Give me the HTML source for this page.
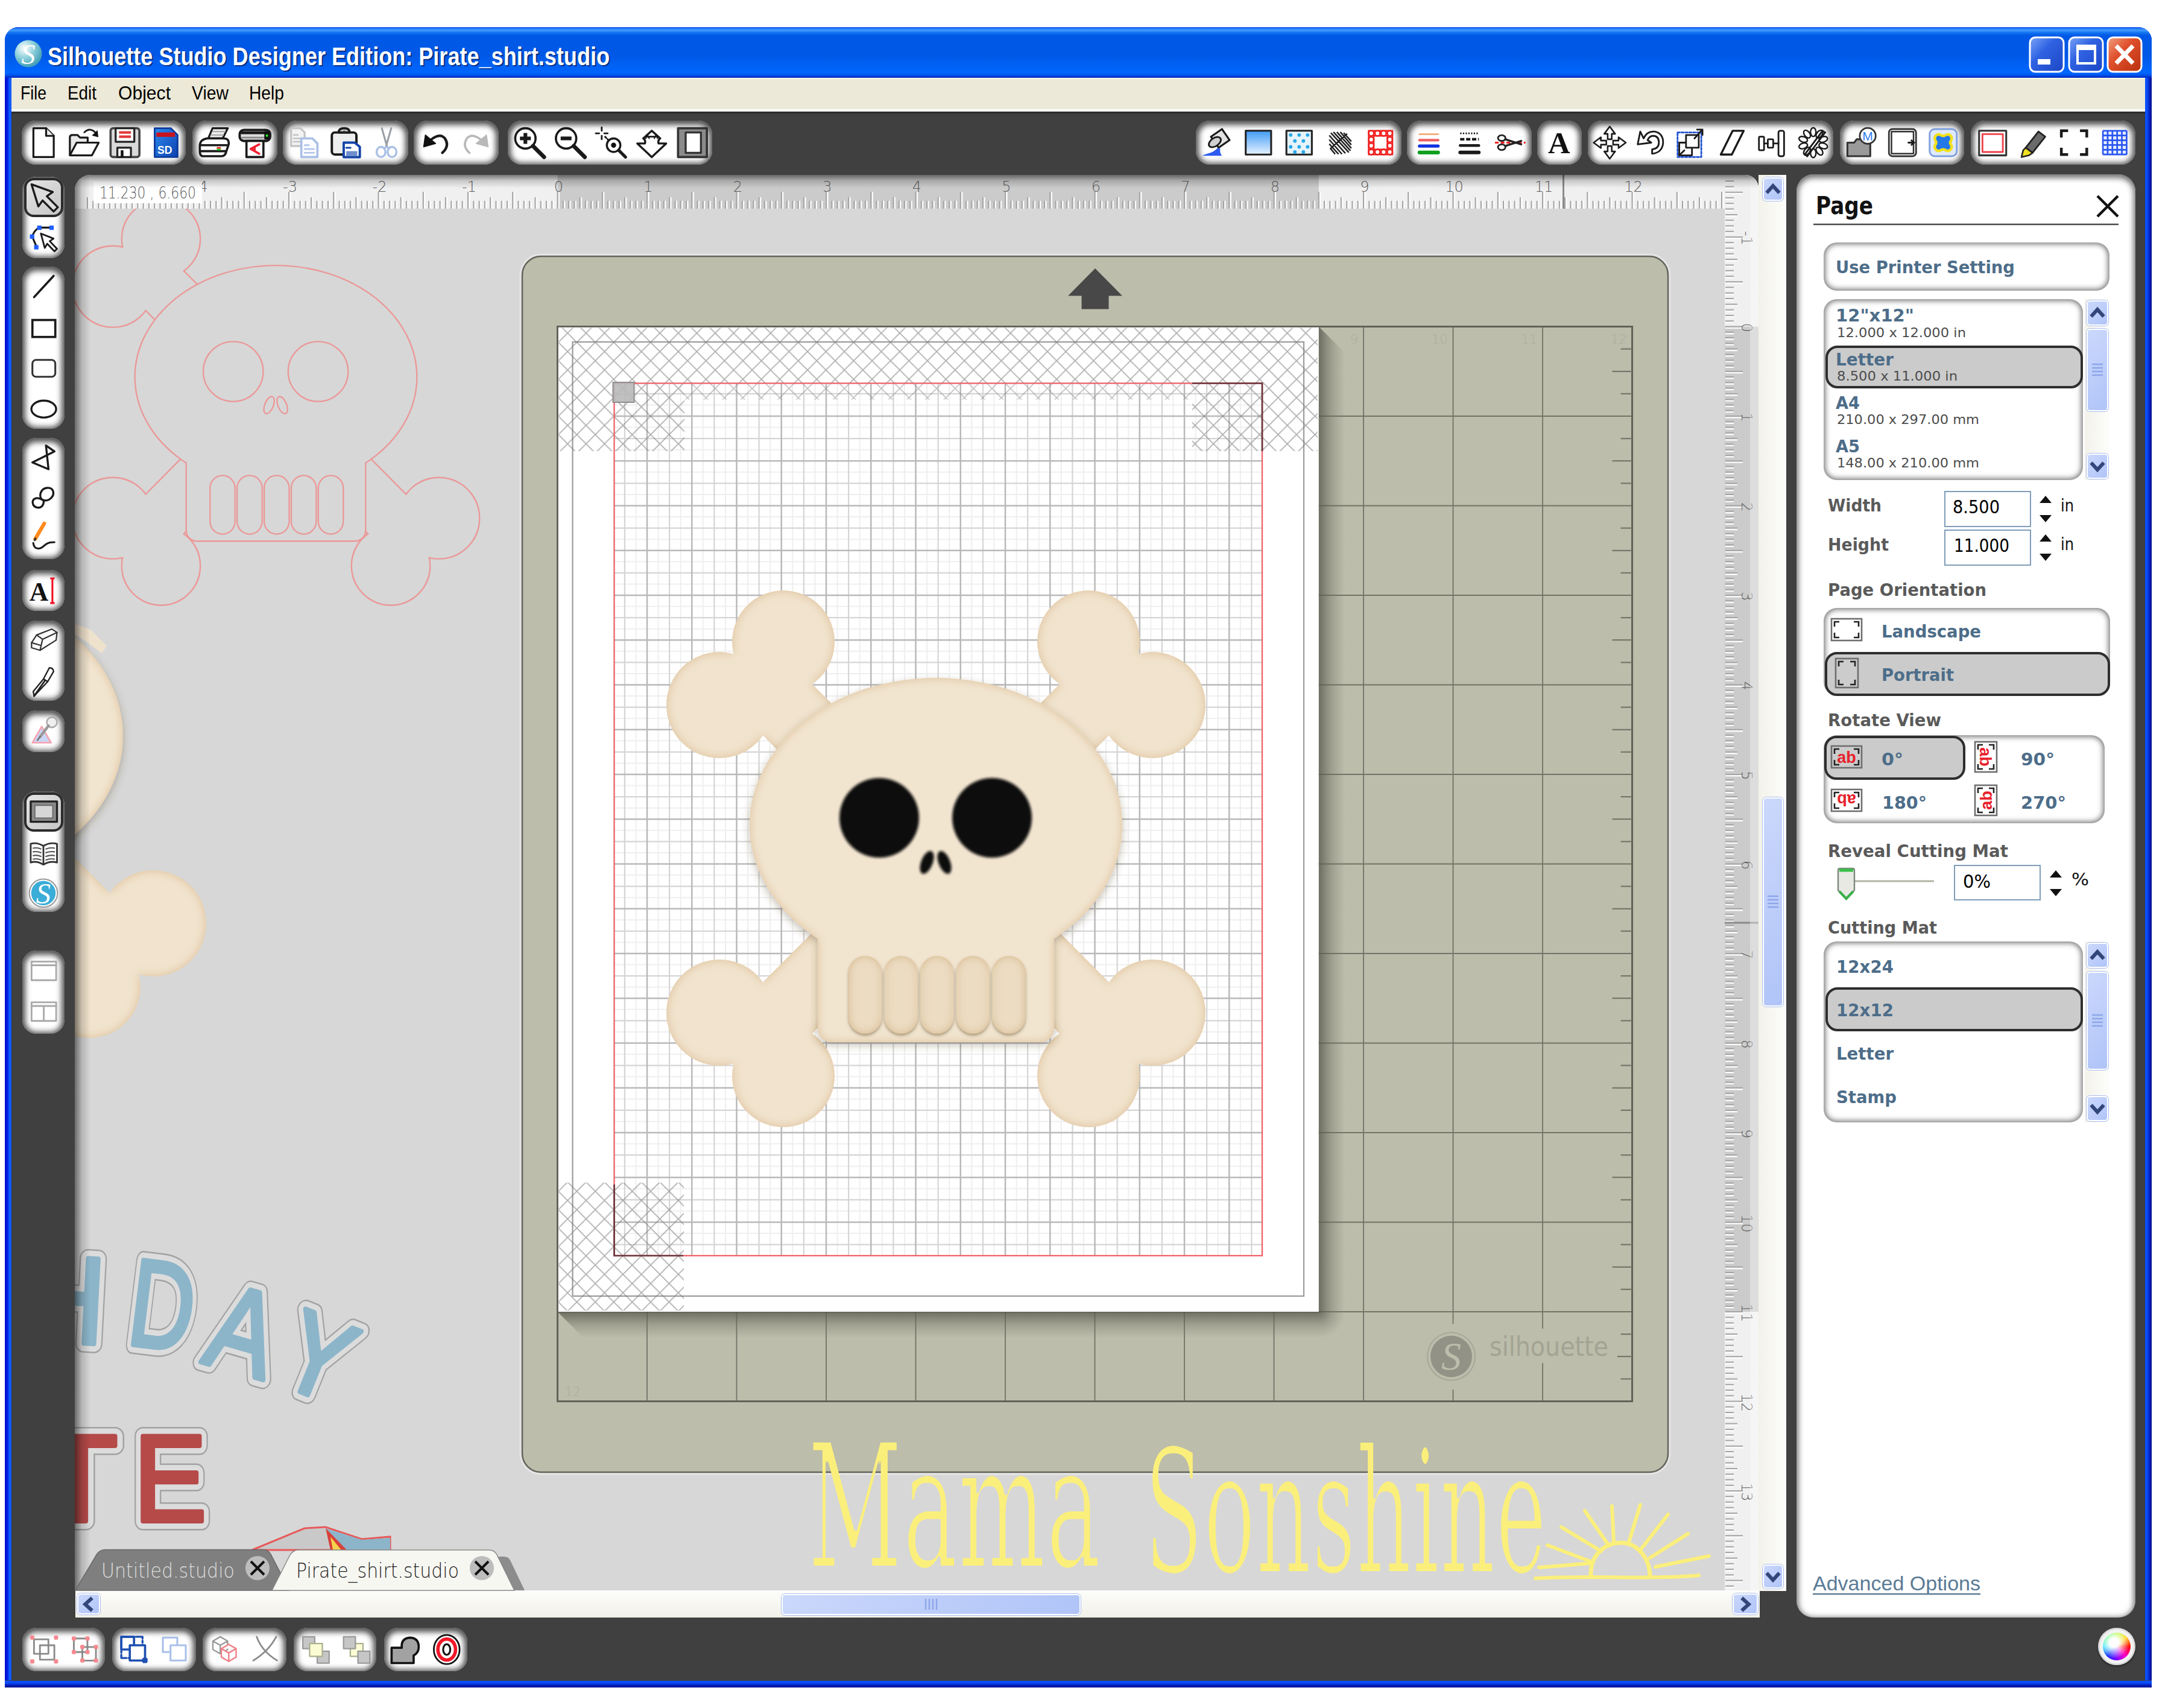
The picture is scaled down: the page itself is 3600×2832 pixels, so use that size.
<!DOCTYPE html><html><head><meta charset="utf-8"><title>Silhouette Studio Designer Edition: Pirate_shirt.studio</title><style>
*{box-sizing:border-box}
html,body{margin:0;padding:0}
body{width:3600px;height:2832px;background:#fff;overflow:hidden;position:relative;font-family:"Liberation Sans","DejaVu Sans",sans-serif}
.a{position:absolute}
#win{left:8px;top:45px;width:3560px;height:2753px;border-radius:22px 22px 0 0;background:#0a31d8;overflow:hidden}
#title{left:0;top:0;width:3560px;height:84px;background:linear-gradient(#0a46e8 0,#2a80f8 3%,#409aff 6.5%,#1272f0 11%,#0058e6 17%,#0058e6 55%,#0061f4 75%,#0066ff 90%,#0052ea 95.5%,#0030c8 98%,#0030c8 100%)}
#lb{left:0;top:84px;width:12px;height:2669px;background:linear-gradient(90deg,#0012d4 0,#0018dc 35%,#0a50f8 58%,#1266ff 78%,#0a4cf0 90%,#4a3c2a 100%)}
#rb{left:3548px;top:84px;width:12px;height:2669px;background:linear-gradient(90deg,#4a3c2a 0,#0a50ff 12%,#0a4af4 40%,#0424c0 65%,#001090 100%)}
#bb{left:0;top:2741px;width:3560px;height:12px;background:linear-gradient(#4a3c2a 0,#0a50ff 12%,#0a4af4 40%,#0424c0 65%,#001090 100%)}
#menu{left:11px;top:84px;width:3538px;height:56px;background:#ece9d8;border-top:2px solid #fffbe2;border-bottom:4px solid #fdfdfc}
#dark{left:11px;top:140px;width:3538px;height:2602px;background:#404040;box-shadow:inset 0 3px 2px #2a2a2a}
.tb{width:57px;height:57px;top:17px;border:3px solid #fff;border-radius:9px;background:radial-gradient(circle at 30% 25%,#5c8df5,#2a5fe0 55%,#1d4ccc)}
.grp{position:absolute;background:#fff;border-radius:23px;box-shadow:inset 0 2px 10px 5px rgba(52,52,52,.85)}
.box{position:absolute;background:#fff;border-radius:22px;box-shadow:inset 0 0 8px 3px rgba(70,70,70,.7)}
.sel{position:absolute;background:#cbcbcb;border:4px solid #2e2e2e;border-radius:20px}
.inp{position:absolute;background:#fff;border:2px solid #7f9db9}
.sbtn{position:absolute;background:linear-gradient(135deg,#cbd8fc,#b0c4f8);border:2px solid #fff;border-radius:6px;box-shadow:0 0 0 1px #a9bdf0}
.track{position:absolute;background:linear-gradient(90deg,#f3f2ea,#fdfdfb)}
.trackh{position:absolute;background:linear-gradient(#fdfdfb,#f1f0e8)}
svg{position:absolute;overflow:visible}
text{white-space:pre}
</style></head><body>
<div id="win" class="a">
<div id="title" class="a"></div><div id="lb" class="a"></div><div id="rb" class="a"></div><div id="bb" class="a"></div>
<div id="menu" class="a"></div><div id="dark" class="a"></div>
</div>
<svg class="a" style="left:0;top:0" width="3600" height="2832" viewBox="0 0 3600 2832"><defs>
<clipPath id="cclip"><path d="M150 290 H2894 A22 22 0 0 1 2916 312 V2637 H124 V316 A26 26 0 0 1 150 290 Z"/></clipPath>
<filter id="edge" x="-5%" y="-5%" width="110%" height="110%"><feComponentTransfer in="SourceAlpha" result="inv"><feFuncA type="table" tableValues="1 0"/></feComponentTransfer>
<feGaussianBlur in="inv" stdDeviation="8" result="bl"/><feFlood flood-color="#d2aa6c" flood-opacity="0.72"/><feComposite operator="in" in2="bl"/><feComposite operator="in" in2="SourceAlpha" result="sh"/>
<feMerge><feMergeNode in="SourceGraphic"/><feMergeNode in="sh"/></feMerge></filter>
<filter id="tooth" x="-10%" y="-10%" width="120%" height="120%"><feComponentTransfer in="SourceAlpha" result="inv"><feFuncA type="table" tableValues="1 0"/></feComponentTransfer>
<feGaussianBlur in="inv" stdDeviation="7" result="bl"/><feFlood flood-color="#cda868" flood-opacity="0.8"/><feComposite operator="in" in2="bl"/><feComposite operator="in" in2="SourceAlpha" result="sh"/>
<feGaussianBlur in="SourceAlpha" stdDeviation="2.5" result="ds"/><feOffset in="ds" dx="0" dy="3" result="ds2"/><feFlood flood-color="#6b5530" flood-opacity=".55"/><feComposite operator="in" in2="ds2" result="ds3"/>
<feMerge><feMergeNode in="ds3"/><feMergeNode in="SourceGraphic"/><feMergeNode in="sh"/></feMerge></filter>
<filter id="hshadow" x="-10%" y="-10%" width="120%" height="120%"><feGaussianBlur in="SourceAlpha" stdDeviation="7" result="b"/><feOffset in="b" dx="0" dy="5" result="o"/><feFlood flood-color="#4a3a20" flood-opacity=".32"/><feComposite operator="in" in2="o" result="s"/><feMerge><feMergeNode in="s"/><feMergeNode in="SourceGraphic"/></feMerge></filter>
<filter id="eyeb" x="-10%" y="-10%" width="120%" height="120%"><feGaussianBlur stdDeviation="2.2"/></filter>
<filter id="thin" x="-2%" y="-10%" width="104%" height="120%"><feMorphology operator="erode" radius="2.2 1.4"/></filter><filter id="blur3"><feGaussianBlur stdDeviation="3"/></filter>
<filter id="blur8" x="-20%" y="-20%" width="140%" height="140%"><feGaussianBlur stdDeviation="8"/></filter>
<pattern id="hatch" width="30.6" height="30.6" patternUnits="userSpaceOnUse" x="941.2" y="552.3"><path d="M-2 -2 L32.6 32.6 M-2 32.6 L32.6 -2" stroke="#7a7a7a" stroke-opacity=".6" stroke-width="1.7" fill="none"/></pattern>
<pattern id="hatchl" width="30.6" height="30.6" patternUnits="userSpaceOnUse" x="941.2" y="552.3"><path d="M-2 -2 L32.6 32.6 M-2 32.6 L32.6 -2" stroke="#7a7a7a" stroke-opacity=".45" stroke-width="1.7" fill="none"/></pattern>
<linearGradient id="shR" x1="0" x2="1" y1="0" y2="0"><stop offset="0" stop-color="#55554a" stop-opacity=".78"/><stop offset=".5" stop-color="#6a6a5e" stop-opacity=".35"/><stop offset="1" stop-color="#77776a" stop-opacity="0"/></linearGradient>
<linearGradient id="shB" x1="0" x2="0" y1="0" y2="1"><stop offset="0" stop-color="#55554a" stop-opacity=".78"/><stop offset=".5" stop-color="#6a6a5e" stop-opacity=".35"/><stop offset="1" stop-color="#77776a" stop-opacity="0"/></linearGradient>
<radialGradient id="shC" cx="0" cy="0" r="1"><stop offset="0" stop-color="#55554a" stop-opacity=".78"/><stop offset=".5" stop-color="#6a6a5e" stop-opacity=".35"/><stop offset="1" stop-color="#77776a" stop-opacity="0"/></radialGradient>
<linearGradient id="inL" x1="0" x2="1" y1="0" y2="0"><stop offset="0" stop-color="#000" stop-opacity=".5"/><stop offset=".45" stop-color="#000" stop-opacity=".16"/><stop offset="1" stop-color="#000" stop-opacity="0"/></linearGradient>
<linearGradient id="inT" x1="0" x2="0" y1="0" y2="1"><stop offset="0" stop-color="#000" stop-opacity=".5"/><stop offset=".45" stop-color="#000" stop-opacity=".16"/><stop offset="1" stop-color="#000" stop-opacity="0"/></linearGradient>

</defs>
<g clip-path="url(#cclip)">
<rect x="124" y="290" width="2792" height="2347" fill="#d7d7d7"/>
<g transform="translate(457.5 616) scale(0.753) translate(-1552 -1356)"><line x1="1246.0" y1="1116.5" x2="1858.0" y2="1731.5" stroke-width="124.21513944223108" stroke-linecap="butt" stroke="#eb9898"/><circle cx="1299" cy="1064" r="85" fill="#d7d7d7" stroke="#eb9898" stroke-width="6.2151394422310755"/><circle cx="1193" cy="1169" r="88" fill="#d7d7d7" stroke="#eb9898" stroke-width="6.2151394422310755"/><circle cx="1911" cy="1679" r="88" fill="#d7d7d7" stroke="#eb9898" stroke-width="6.2151394422310755"/><circle cx="1805" cy="1784" r="85" fill="#d7d7d7" stroke="#eb9898" stroke-width="6.2151394422310755"/><line x1="1246.0" y1="1116.5" x2="1858.0" y2="1731.5" stroke-width="118" stroke-linecap="butt" stroke="#d7d7d7"/><circle cx="1299" cy="1064" r="85" fill="#d7d7d7"/><circle cx="1193" cy="1169" r="88" fill="#d7d7d7"/><circle cx="1911" cy="1679" r="88" fill="#d7d7d7"/><circle cx="1805" cy="1784" r="85" fill="#d7d7d7"/><line x1="1246.0" y1="1731.5" x2="1552" y2="1423" stroke-width="124.21513944223108" stroke-linecap="butt" stroke="#eb9898"/><circle cx="1193" cy="1679" r="88" fill="#d7d7d7" stroke="#eb9898" stroke-width="6.2151394422310755"/><circle cx="1299" cy="1784" r="85" fill="#d7d7d7" stroke="#eb9898" stroke-width="6.2151394422310755"/><line x1="1246.0" y1="1731.5" x2="1552" y2="1423" stroke-width="118" stroke-linecap="butt" stroke="#d7d7d7"/><circle cx="1193" cy="1679" r="88" fill="#d7d7d7"/><circle cx="1299" cy="1784" r="85" fill="#d7d7d7"/><ellipse cx="1552" cy="1368" rx="309" ry="244" fill="#d7d7d7" stroke="#eb9898" stroke-width="6.2151394422310755"/><rect x="1356" y="1480" width="392" height="248" rx="22" ry="22" fill="#d7d7d7" stroke="#eb9898" stroke-width="6.2151394422310755"/><ellipse cx="1552" cy="1368" rx="309" ry="244" fill="#d7d7d7"/><rect x="1356" y="1480" width="392" height="248" rx="22" ry="22" fill="#d7d7d7"/><rect x="1407.0" y="1585" width="55" height="129" rx="27.5" ry="27.5" fill="none" stroke="#eb9898" stroke-width="3.1075697211155378"/><rect x="1466.6" y="1585" width="55" height="129" rx="27.5" ry="27.5" fill="none" stroke="#eb9898" stroke-width="3.1075697211155378"/><rect x="1526.2" y="1585" width="55" height="129" rx="27.5" ry="27.5" fill="none" stroke="#eb9898" stroke-width="3.1075697211155378"/><rect x="1585.8" y="1585" width="55" height="129" rx="27.5" ry="27.5" fill="none" stroke="#eb9898" stroke-width="3.1075697211155378"/><rect x="1645.4" y="1585" width="55" height="129" rx="27.5" ry="27.5" fill="none" stroke="#eb9898" stroke-width="3.1075697211155378"/><circle cx="1458" cy="1356" r="66" fill="none" stroke="#eb9898" stroke-width="3.1075697211155378"/><circle cx="1645" cy="1356" r="66" fill="none" stroke="#eb9898" stroke-width="3.1075697211155378"/><ellipse cx="1537" cy="1430" rx="9.5" ry="20" transform="rotate(22 1537 1430)" fill="none" stroke="#eb9898" stroke-width="3.1075697211155378"/><ellipse cx="1566" cy="1430" rx="9.5" ry="20" transform="rotate(-22 1566 1430)" fill="none" stroke="#eb9898" stroke-width="3.1075697211155378"/></g>
<g transform="translate(-1657 -148)"><g filter="url(#edge)"><line x1="1246.0" y1="1116.5" x2="1858.0" y2="1731.5" stroke-width="118" stroke-linecap="butt" stroke="#f1e3cd"/><circle cx="1299" cy="1064" r="85" fill="#f1e3cd"/><circle cx="1193" cy="1169" r="88" fill="#f1e3cd"/><circle cx="1911" cy="1679" r="88" fill="#f1e3cd"/><circle cx="1805" cy="1784" r="85" fill="#f1e3cd"/></g><g filter="url(#edge)"><line x1="1246.0" y1="1731.5" x2="1552" y2="1423" stroke-width="118" stroke-linecap="butt" stroke="#f1e3cd"/><circle cx="1193" cy="1679" r="88" fill="#f1e3cd"/><circle cx="1299" cy="1784" r="85" fill="#f1e3cd"/></g><g filter="url(#hshadow)"><g filter="url(#edge)"><ellipse cx="1552" cy="1368" rx="309" ry="244" fill="#f2e5d0"/><rect x="1356" y="1480" width="392" height="248" rx="22" ry="22" fill="#f2e5d0"/></g></g><g filter="url(#tooth)"><rect x="1407.0" y="1585" width="55" height="129" rx="27.5" ry="27.5" fill="#ecdcc2"/><rect x="1466.6" y="1585" width="55" height="129" rx="27.5" ry="27.5" fill="#ecdcc2"/><rect x="1526.2" y="1585" width="55" height="129" rx="27.5" ry="27.5" fill="#ecdcc2"/><rect x="1585.8" y="1585" width="55" height="129" rx="27.5" ry="27.5" fill="#ecdcc2"/><rect x="1645.4" y="1585" width="55" height="129" rx="27.5" ry="27.5" fill="#ecdcc2"/></g><g filter="url(#eyeb)"><circle cx="1458" cy="1356" r="66" fill="#0b0b0b"/><circle cx="1645" cy="1356" r="66" fill="#0b0b0b"/><ellipse cx="1537" cy="1430" rx="9.5" ry="20" transform="rotate(22 1537 1430)" fill="#0b0b0b"/><ellipse cx="1566" cy="1430" rx="9.5" ry="20" transform="rotate(-22 1566 1430)" fill="#0b0b0b"/></g></g>
<path d="M124 1034 L150 1044 L177 1071 L169 1083 L141 1062 L124 1052 Z" fill="#efe2cd"/>
<g transform="translate(38 2222) rotate(3) scale(0.9 1)" font-family='"Liberation Sans",sans-serif' font-weight="normal" font-size="205" stroke-linejoin="round" stroke-linecap="round"><text x="0" y="0" fill="#a2a2a2" stroke="#a2a2a2" stroke-width="31">H</text><text x="0" y="0" fill="#dcdcdc" stroke="#dcdcdc" stroke-width="26">H</text><text x="0" y="0" fill="#8cb5c9" stroke="#8cb5c9" stroke-width="8">H</text></g>
<g transform="translate(208 2228) rotate(7) scale(0.72 1)" font-family='"Liberation Sans",sans-serif' font-weight="normal" font-size="205" stroke-linejoin="round" stroke-linecap="round"><text x="0" y="0" fill="#a2a2a2" stroke="#a2a2a2" stroke-width="31">D</text><text x="0" y="0" fill="#dcdcdc" stroke="#dcdcdc" stroke-width="26">D</text><text x="0" y="0" fill="#8cb5c9" stroke="#8cb5c9" stroke-width="8">D</text></g>
<g transform="translate(332 2258) rotate(16) scale(0.82 1)" font-family='"Liberation Sans",sans-serif' font-weight="normal" font-size="200" stroke-linejoin="round" stroke-linecap="round"><text x="0" y="0" fill="#a2a2a2" stroke="#a2a2a2" stroke-width="31">A</text><text x="0" y="0" fill="#dcdcdc" stroke="#dcdcdc" stroke-width="26">A</text><text x="0" y="0" fill="#8cb5c9" stroke="#8cb5c9" stroke-width="8">A</text></g>
<g transform="translate(454 2290) rotate(22) scale(0.85 1)" font-family='"Liberation Sans",sans-serif' font-weight="normal" font-size="190" stroke-linejoin="round" stroke-linecap="round"><text x="0" y="0" fill="#a2a2a2" stroke="#a2a2a2" stroke-width="31">Y</text><text x="0" y="0" fill="#dcdcdc" stroke="#dcdcdc" stroke-width="26">Y</text><text x="0" y="0" fill="#8cb5c9" stroke="#8cb5c9" stroke-width="8">Y</text></g>
<g transform="translate(70 2522) rotate(0) scale(1.0 1)" font-family='"Liberation Sans",sans-serif' font-weight="normal" font-size="205" stroke-linejoin="round" stroke-linecap="round"><text x="0" y="0" fill="#a2a2a2" stroke="#a2a2a2" stroke-width="31">T</text><text x="0" y="0" fill="#dcdcdc" stroke="#dcdcdc" stroke-width="26">T</text><text x="0" y="0" fill="#b54a49" stroke="#b54a49" stroke-width="8">T</text></g>
<g transform="translate(222 2522) rotate(0) scale(0.88 1)" font-family='"Liberation Sans",sans-serif' font-weight="normal" font-size="205" stroke-linejoin="round" stroke-linecap="round"><text x="0" y="0" fill="#a2a2a2" stroke="#a2a2a2" stroke-width="31">E</text><text x="0" y="0" fill="#dcdcdc" stroke="#dcdcdc" stroke-width="26">E</text><text x="0" y="0" fill="#b54a49" stroke="#b54a49" stroke-width="8">E</text></g>
<path d="M418 2570 L505 2534 L540 2532 L600 2552 L647 2548 L647 2570 Z" fill="#c9c9c9" stroke="#e8595a" stroke-width="3"/>
<path d="M540 2534 L600 2553 L647 2550 L647 2570 L560 2570 Z" fill="#8cb5c9"/><path d="M540 2534 L575 2570 L548 2570 Z" fill="#d8403c"/><path d="M548 2548 L566 2570 L552 2570 Z" fill="#f7d34d"/>
<rect x="866" y="425" width="1900" height="2016" rx="31" ry="31" fill="#bcbdab" stroke="#63645a" stroke-width="2.5"/>
<rect x="863" y="422" width="1906" height="2022" rx="34" ry="34" fill="none" stroke="#fff" stroke-opacity=".35" stroke-width="3"/>
<path d="M1073.0 541.5 V2323.5 M924.5 690.0 H2706.5 M1221.5 541.5 V2323.5 M924.5 838.5 H2706.5 M1370.0 541.5 V2323.5 M924.5 987.0 H2706.5 M1518.5 541.5 V2323.5 M924.5 1135.5 H2706.5 M1667.0 541.5 V2323.5 M924.5 1284.0 H2706.5 M1815.5 541.5 V2323.5 M924.5 1432.5 H2706.5 M1964.0 541.5 V2323.5 M924.5 1581.0 H2706.5 M2112.5 541.5 V2323.5 M924.5 1729.5 H2706.5 M2261.0 541.5 V2323.5 M924.5 1878.0 H2706.5 M2409.5 541.5 V2323.5 M924.5 2026.5 H2706.5 M2558.0 541.5 V2323.5 M924.5 2175.0 H2706.5" stroke="#727366" stroke-width="1.8" fill="none"/>
<rect x="924.5" y="541.5" width="1782.0" height="1782.0" fill="none" stroke="#616257" stroke-width="3"/>
<path d="M2687.5 578.6 H2706.5 M2673.5 615.8 H2706.5 M2687.5 652.9 H2706.5 M2687.5 727.1 H2706.5 M2673.5 764.2 H2706.5 M2687.5 801.4 H2706.5 M2687.5 875.6 H2706.5 M2673.5 912.8 H2706.5 M2687.5 949.9 H2706.5 M2687.5 1024.1 H2706.5 M2673.5 1061.2 H2706.5 M2687.5 1098.4 H2706.5 M2687.5 1172.6 H2706.5 M2673.5 1209.8 H2706.5 M2687.5 1246.9 H2706.5 M2687.5 1321.1 H2706.5 M2673.5 1358.2 H2706.5 M2687.5 1395.4 H2706.5 M2687.5 1469.6 H2706.5 M2673.5 1506.8 H2706.5 M2687.5 1543.9 H2706.5 M2687.5 1618.1 H2706.5 M2673.5 1655.2 H2706.5 M2687.5 1692.4 H2706.5 M2687.5 1766.6 H2706.5 M2673.5 1803.8 H2706.5 M2687.5 1840.9 H2706.5 M2687.5 1915.1 H2706.5 M2673.5 1952.2 H2706.5 M2687.5 1989.4 H2706.5 M2687.5 2063.6 H2706.5 M2673.5 2100.8 H2706.5 M2687.5 2137.9 H2706.5 M2687.5 2212.1 H2706.5 M2673.5 2249.2 H2706.5 M2687.5 2286.4 H2706.5" stroke="#77786b" stroke-width="2.2" fill="none"/>
<text x="1064.0" y="569.5" font-size="21" font-weight="200" font-family='"DejaVu Sans","Liberation Sans",sans-serif' fill="#adae9e" text-anchor="end" >1</text>
<text x="1212.5" y="569.5" font-size="21" font-weight="200" font-family='"DejaVu Sans","Liberation Sans",sans-serif' fill="#adae9e" text-anchor="end" >2</text>
<text x="1361.0" y="569.5" font-size="21" font-weight="200" font-family='"DejaVu Sans","Liberation Sans",sans-serif' fill="#adae9e" text-anchor="end" >3</text>
<text x="1509.5" y="569.5" font-size="21" font-weight="200" font-family='"DejaVu Sans","Liberation Sans",sans-serif' fill="#adae9e" text-anchor="end" >4</text>
<text x="1658.0" y="569.5" font-size="21" font-weight="200" font-family='"DejaVu Sans","Liberation Sans",sans-serif' fill="#adae9e" text-anchor="end" >5</text>
<text x="1806.5" y="569.5" font-size="21" font-weight="200" font-family='"DejaVu Sans","Liberation Sans",sans-serif' fill="#adae9e" text-anchor="end" >6</text>
<text x="1955.0" y="569.5" font-size="21" font-weight="200" font-family='"DejaVu Sans","Liberation Sans",sans-serif' fill="#adae9e" text-anchor="end" >7</text>
<text x="2103.5" y="569.5" font-size="21" font-weight="200" font-family='"DejaVu Sans","Liberation Sans",sans-serif' fill="#adae9e" text-anchor="end" >8</text>
<text x="2252.0" y="569.5" font-size="21" font-weight="200" font-family='"DejaVu Sans","Liberation Sans",sans-serif' fill="#adae9e" text-anchor="end" >9</text>
<text x="2400.5" y="569.5" font-size="21" font-weight="200" font-family='"DejaVu Sans","Liberation Sans",sans-serif' fill="#adae9e" text-anchor="end" >10</text>
<text x="2549.0" y="569.5" font-size="21" font-weight="200" font-family='"DejaVu Sans","Liberation Sans",sans-serif' fill="#adae9e" text-anchor="end" >11</text>
<text x="2697.5" y="569.5" font-size="21" font-weight="200" font-family='"DejaVu Sans","Liberation Sans",sans-serif' fill="#adae9e" text-anchor="end" >12</text>
<text x="936.5" y="2314.5" font-size="21" font-weight="200" font-family='"DejaVu Sans","Liberation Sans",sans-serif' fill="#adae9e" text-anchor="start" >12</text>
<rect x="2358" y="2195" width="92" height="109" fill="#bcbdab"/><rect x="2450" y="2203" width="232" height="57" fill="#bcbdab"/>
<circle cx="2406.5" cy="2249" r="39.5" fill="none" stroke="#a8a99a" stroke-width="2.2"/><circle cx="2406.5" cy="2249" r="34.5" fill="#929386"/>
<text x="2406.5" y="2271" font-size="66" font-weight="normal" font-family='"Liberation Serif",serif' fill="#bcbdab" text-anchor="middle" font-style="italic">S</text>
<text x="2470" y="2248" font-size="45" font-weight="normal" font-family='"DejaVu Sans","Liberation Sans",sans-serif' fill="#a3a493" text-anchor="start" textLength="197" lengthAdjust="spacingAndGlyphs" >silhouette</text>
<path d="M1816 445 L1861 490.5 L1838.5 490.5 L1838.5 512.5 L1793.5 512.5 L1793.5 490.5 L1771 490.5 Z" fill="#484848"/>
<path d="M2186.75 541.5 L2230.75 585.5 V2175.0 H2186.75 Z" fill="url(#shR)"/>
<path d="M924.5 2175.0 L968.5 2219.0 H2186.75 V2175.0 Z" fill="url(#shB)"/>
<g transform="translate(2186.75 2175.0) scale(44)"><path d="M0 0 H1 A1 1 0 0 1 0 1 Z" fill="url(#shC)"/></g>
<rect x="924.5" y="541.5" width="1262.2" height="1633.5" fill="#fff"/>
<rect x="949.5" y="567" width="1212.5" height="1582" fill="none" stroke="#9b9b9b" stroke-width="2.2"/>
<path d="M1054.44 635.5 V2082 M1091.56 635.5 V2082 M1128.69 635.5 V2082 M1165.81 635.5 V2082 M1202.94 635.5 V2082 M1240.06 635.5 V2082 M1277.19 635.5 V2082 M1314.31 635.5 V2082 M1351.44 635.5 V2082 M1388.56 635.5 V2082 M1425.69 635.5 V2082 M1462.81 635.5 V2082 M1499.94 635.5 V2082 M1537.06 635.5 V2082 M1574.19 635.5 V2082 M1611.31 635.5 V2082 M1648.44 635.5 V2082 M1685.56 635.5 V2082 M1722.69 635.5 V2082 M1759.81 635.5 V2082 M1796.94 635.5 V2082 M1834.06 635.5 V2082 M1871.19 635.5 V2082 M1908.31 635.5 V2082 M1945.44 635.5 V2082 M1982.56 635.5 V2082 M2019.69 635.5 V2082 M2056.81 635.5 V2082 M1018.5 671.44 H2093 M1018.5 708.56 H2093 M1018.5 745.69 H2093 M1018.5 782.81 H2093 M1018.5 819.94 H2093 M1018.5 857.06 H2093 M1018.5 894.19 H2093 M1018.5 931.31 H2093 M1018.5 968.44 H2093 M1018.5 1005.56 H2093 M1018.5 1042.69 H2093 M1018.5 1079.81 H2093 M1018.5 1116.94 H2093 M1018.5 1154.06 H2093 M1018.5 1191.19 H2093 M1018.5 1228.31 H2093 M1018.5 1265.44 H2093 M1018.5 1302.56 H2093 M1018.5 1339.69 H2093 M1018.5 1376.81 H2093 M1018.5 1413.94 H2093 M1018.5 1451.06 H2093 M1018.5 1488.19 H2093 M1018.5 1525.31 H2093 M1018.5 1562.44 H2093 M1018.5 1599.56 H2093 M1018.5 1636.69 H2093 M1018.5 1673.81 H2093 M1018.5 1710.94 H2093 M1018.5 1748.06 H2093 M1018.5 1785.19 H2093 M1018.5 1822.31 H2093 M1018.5 1859.44 H2093 M1018.5 1896.56 H2093 M1018.5 1933.69 H2093 M1018.5 1970.81 H2093 M1018.5 2007.94 H2093 M1018.5 2045.06 H2093" stroke="#efefef" stroke-width="2" fill="none"/>
<path d="M1035.88 635.5 V2082 M1110.12 635.5 V2082 M1184.38 635.5 V2082 M1258.62 635.5 V2082 M1332.88 635.5 V2082 M1407.12 635.5 V2082 M1481.38 635.5 V2082 M1555.62 635.5 V2082 M1629.88 635.5 V2082 M1704.12 635.5 V2082 M1778.38 635.5 V2082 M1852.62 635.5 V2082 M1926.88 635.5 V2082 M2001.12 635.5 V2082 M2075.38 635.5 V2082 M1018.5 652.88 H2093 M1018.5 727.12 H2093 M1018.5 801.38 H2093 M1018.5 875.62 H2093 M1018.5 949.88 H2093 M1018.5 1024.12 H2093 M1018.5 1098.38 H2093 M1018.5 1172.62 H2093 M1018.5 1246.88 H2093 M1018.5 1321.12 H2093 M1018.5 1395.38 H2093 M1018.5 1469.62 H2093 M1018.5 1543.88 H2093 M1018.5 1618.12 H2093 M1018.5 1692.38 H2093 M1018.5 1766.62 H2093 M1018.5 1840.88 H2093 M1018.5 1915.12 H2093 M1018.5 1989.38 H2093 M1018.5 2063.62 H2093" stroke="#d5d5d5" stroke-width="2.2" fill="none"/>
<path d="M1073.00 635.5 V2082 M1147.25 635.5 V2082 M1221.50 635.5 V2082 M1295.75 635.5 V2082 M1370.00 635.5 V2082 M1444.25 635.5 V2082 M1518.50 635.5 V2082 M1592.75 635.5 V2082 M1667.00 635.5 V2082 M1741.25 635.5 V2082 M1815.50 635.5 V2082 M1889.75 635.5 V2082 M1964.00 635.5 V2082 M2038.25 635.5 V2082 M1018.5 690.00 H2093 M1018.5 764.25 H2093 M1018.5 838.50 H2093 M1018.5 912.75 H2093 M1018.5 987.00 H2093 M1018.5 1061.25 H2093 M1018.5 1135.50 H2093 M1018.5 1209.75 H2093 M1018.5 1284.00 H2093 M1018.5 1358.25 H2093 M1018.5 1432.50 H2093 M1018.5 1506.75 H2093 M1018.5 1581.00 H2093 M1018.5 1655.25 H2093 M1018.5 1729.50 H2093 M1018.5 1803.75 H2093 M1018.5 1878.00 H2093 M1018.5 1952.25 H2093 M1018.5 2026.50 H2093" stroke="#b9b9b9" stroke-width="2.5" fill="none"/>
<path d="M926.5 543.5 H2184.75 V748 H1977 V635.5 H1135 V748 H926.5 Z" fill="url(#hatch)"/>
<rect x="1135" y="635.5" width="842" height="27" fill="url(#hatchl)"/>
<rect x="926.5" y="1961" width="207.5" height="212.0" fill="url(#hatch)"/>
<rect x="1018.5" y="635.5" width="1074.5" height="1446.5" fill="none" stroke="#f0626a" stroke-width="2.3"/>
<rect x="1016.5" y="634" width="35" height="33" fill="#b9b9b9" fill-opacity=".9" stroke="#8e8e8e" stroke-width="2"/>
<path d="M1977 635.5 H2093 V748" fill="none" stroke="#6b373d" stroke-width="2.7"/>
<path d="M1018.5 1964 V2082 H1133" fill="none" stroke="#6b373d" stroke-width="2.7"/>
<path d="M924.5 2175.0 V541.5 H2186.75" fill="none" stroke="#5b5c52" stroke-width="2.6"/>
<g filter="url(#edge)"><line x1="1246.0" y1="1116.5" x2="1858.0" y2="1731.5" stroke-width="118" stroke-linecap="butt" stroke="#f1e3cd"/><circle cx="1299" cy="1064" r="85" fill="#f1e3cd"/><circle cx="1193" cy="1169" r="88" fill="#f1e3cd"/><circle cx="1911" cy="1679" r="88" fill="#f1e3cd"/><circle cx="1805" cy="1784" r="85" fill="#f1e3cd"/></g><g filter="url(#edge)"><line x1="1246.0" y1="1731.5" x2="1858.0" y2="1116.5" stroke-width="118" stroke-linecap="butt" stroke="#f1e3cd"/><circle cx="1193" cy="1679" r="88" fill="#f1e3cd"/><circle cx="1299" cy="1784" r="85" fill="#f1e3cd"/><circle cx="1805" cy="1064" r="85" fill="#f1e3cd"/><circle cx="1911" cy="1169" r="88" fill="#f1e3cd"/></g><g filter="url(#hshadow)"><g filter="url(#edge)"><ellipse cx="1552" cy="1368" rx="309" ry="244" fill="#f2e5d0"/><rect x="1356" y="1480" width="392" height="248" rx="22" ry="22" fill="#f2e5d0"/></g></g><g filter="url(#tooth)"><rect x="1407.0" y="1585" width="55" height="129" rx="27.5" ry="27.5" fill="#ecdcc2"/><rect x="1466.6" y="1585" width="55" height="129" rx="27.5" ry="27.5" fill="#ecdcc2"/><rect x="1526.2" y="1585" width="55" height="129" rx="27.5" ry="27.5" fill="#ecdcc2"/><rect x="1585.8" y="1585" width="55" height="129" rx="27.5" ry="27.5" fill="#ecdcc2"/><rect x="1645.4" y="1585" width="55" height="129" rx="27.5" ry="27.5" fill="#ecdcc2"/></g><g filter="url(#eyeb)"><circle cx="1458" cy="1356" r="66" fill="#0b0b0b"/><circle cx="1645" cy="1356" r="66" fill="#0b0b0b"/><ellipse cx="1537" cy="1430" rx="9.5" ry="20" transform="rotate(22 1537 1430)" fill="#0b0b0b"/><ellipse cx="1566" cy="1430" rx="9.5" ry="20" transform="rotate(-22 1566 1430)" fill="#0b0b0b"/></g>
<g filter="url(#thin)">
<text x="1339" y="2597" font-size="283" font-weight="normal" font-family='"DejaVu Serif Condensed","DejaVu Serif","Liberation Serif",serif' fill="#fbef7c" text-anchor="start" textLength="487" lengthAdjust="spacingAndGlyphs" >Mama</text>
<text x="1897" y="2606" font-size="283" font-weight="normal" font-family='"DejaVu Serif Condensed","DejaVu Serif","Liberation Serif",serif' fill="#fbef7c" text-anchor="start" textLength="668" lengthAdjust="spacingAndGlyphs" >Sonshine</text>
</g>
<path d="M2546 2617 C2640 2611 2730 2620 2817 2612 M2552 2599 L2638 2592 M2566 2562 L2640 2590 M2589 2532 L2655 2572 M2628 2505 L2668 2563 M2673 2497 L2676 2556 M2720 2495 L2700 2560 M2766 2511 L2720 2570 M2799 2543 L2736 2583 M2834 2580 L2745 2598" stroke="#fbef7c" stroke-width="6" fill="none" stroke-linecap="round"/>
<path d="M2638 2615 C2636 2575 2664 2558 2688 2558 C2714 2558 2736 2582 2736 2615" stroke="#fbef7c" stroke-width="7" fill="none"/>
<rect x="124" y="290" width="2792" height="56" fill="#f0f0f0"/>
<rect x="924.5" y="290" width="1262.2" height="56" fill="#cbcbcb"/>
<rect x="2860" y="290" width="56" height="2347" fill="#f0f0f0"/>
<rect x="2860" y="541.5" width="56" height="1633.5" fill="#cbcbcb"/>
<path d="M147.3 327 V346 M156.6 333 V346 M165.8 333 V346 M175.1 333 V346 M184.4 318 V346 M193.7 333 V346 M203.0 333 V346 M212.2 333 V346 M221.5 327 V346 M230.8 333 V346 M240.1 333 V346 M249.4 333 V346 M258.6 318 V346 M267.9 333 V346 M277.2 333 V346 M286.5 333 V346 M295.8 327 V346 M305.1 333 V346 M314.3 333 V346 M323.6 333 V346 M332.9 318 V346 M342.2 333 V346 M351.5 333 V346 M360.7 333 V346 M370.0 327 V346 M379.3 333 V346 M388.6 333 V346 M397.9 333 V346 M407.1 318 V346 M416.4 333 V346 M425.7 333 V346 M435.0 333 V346 M444.3 327 V346 M453.6 333 V346 M462.8 333 V346 M472.1 333 V346 M481.4 318 V346 M490.7 333 V346 M500.0 333 V346 M509.2 333 V346 M518.5 327 V346 M527.8 333 V346 M537.1 333 V346 M546.4 333 V346 M555.6 318 V346 M564.9 333 V346 M574.2 333 V346 M583.5 333 V346 M592.8 327 V346 M602.1 333 V346 M611.3 333 V346 M620.6 333 V346 M629.9 318 V346 M639.2 333 V346 M648.5 333 V346 M657.7 333 V346 M667.0 327 V346 M676.3 333 V346 M685.6 333 V346 M694.9 333 V346 M704.1 318 V346 M713.4 333 V346 M722.7 333 V346 M732.0 333 V346 M741.3 327 V346 M750.6 333 V346 M759.8 333 V346 M769.1 333 V346 M778.4 318 V346 M787.7 333 V346 M797.0 333 V346 M806.2 333 V346 M815.5 327 V346 M824.8 333 V346 M834.1 333 V346 M843.4 333 V346 M852.6 318 V346 M861.9 333 V346 M871.2 333 V346 M880.5 333 V346 M889.8 327 V346 M899.1 333 V346 M908.3 333 V346 M917.6 333 V346 M926.9 318 V346 M936.2 333 V346 M945.5 333 V346 M954.7 333 V346 M964.0 327 V346 M973.3 333 V346 M982.6 333 V346 M991.9 333 V346 M1001.1 318 V346 M1010.4 333 V346 M1019.7 333 V346 M1029.0 333 V346 M1038.3 327 V346 M1047.6 333 V346 M1056.8 333 V346 M1066.1 333 V346 M1075.4 318 V346 M1084.7 333 V346 M1094.0 333 V346 M1103.2 333 V346 M1112.5 327 V346 M1121.8 333 V346 M1131.1 333 V346 M1140.4 333 V346 M1149.7 318 V346 M1158.9 333 V346 M1168.2 333 V346 M1177.5 333 V346 M1186.8 327 V346 M1196.1 333 V346 M1205.3 333 V346 M1214.6 333 V346 M1223.9 318 V346 M1233.2 333 V346 M1242.5 333 V346 M1251.7 333 V346 M1261.0 327 V346 M1270.3 333 V346 M1279.6 333 V346 M1288.9 333 V346 M1298.2 318 V346 M1307.4 333 V346 M1316.7 333 V346 M1326.0 333 V346 M1335.3 327 V346 M1344.6 333 V346 M1353.8 333 V346 M1363.1 333 V346 M1372.4 318 V346 M1381.7 333 V346 M1391.0 333 V346 M1400.2 333 V346 M1409.5 327 V346 M1418.8 333 V346 M1428.1 333 V346 M1437.4 333 V346 M1446.7 318 V346 M1455.9 333 V346 M1465.2 333 V346 M1474.5 333 V346 M1483.8 327 V346 M1493.1 333 V346 M1502.3 333 V346 M1511.6 333 V346 M1520.9 318 V346 M1530.2 333 V346 M1539.5 333 V346 M1548.7 333 V346 M1558.0 327 V346 M1567.3 333 V346 M1576.6 333 V346 M1585.9 333 V346 M1595.2 318 V346 M1604.4 333 V346 M1613.7 333 V346 M1623.0 333 V346 M1632.3 327 V346 M1641.6 333 V346 M1650.8 333 V346 M1660.1 333 V346 M1669.4 318 V346 M1678.7 333 V346 M1688.0 333 V346 M1697.2 333 V346 M1706.5 327 V346 M1715.8 333 V346 M1725.1 333 V346 M1734.4 333 V346 M1743.7 318 V346 M1752.9 333 V346 M1762.2 333 V346 M1771.5 333 V346 M1780.8 327 V346 M1790.1 333 V346 M1799.3 333 V346 M1808.6 333 V346 M1817.9 318 V346 M1827.2 333 V346 M1836.5 333 V346 M1845.7 333 V346 M1855.0 327 V346 M1864.3 333 V346 M1873.6 333 V346 M1882.9 333 V346 M1892.2 318 V346 M1901.4 333 V346 M1910.7 333 V346 M1920.0 333 V346 M1929.3 327 V346 M1938.6 333 V346 M1947.8 333 V346 M1957.1 333 V346 M1966.4 318 V346 M1975.7 333 V346 M1985.0 333 V346 M1994.2 333 V346 M2003.5 327 V346 M2012.8 333 V346 M2022.1 333 V346 M2031.4 333 V346 M2040.7 318 V346 M2049.9 333 V346 M2059.2 333 V346 M2068.5 333 V346 M2077.8 327 V346 M2087.1 333 V346 M2096.3 333 V346 M2105.6 333 V346 M2114.9 318 V346 M2124.2 333 V346 M2133.5 333 V346 M2142.7 333 V346 M2152.0 327 V346 M2161.3 333 V346 M2170.6 333 V346 M2179.9 333 V346 M2189.2 318 V346 M2198.4 333 V346 M2207.7 333 V346 M2217.0 333 V346 M2226.3 327 V346 M2235.6 333 V346 M2244.8 333 V346 M2254.1 333 V346 M2263.4 318 V346 M2272.7 333 V346 M2282.0 333 V346 M2291.2 333 V346 M2300.5 327 V346 M2309.8 333 V346 M2319.1 333 V346 M2328.4 333 V346 M2337.7 318 V346 M2346.9 333 V346 M2356.2 333 V346 M2365.5 333 V346 M2374.8 327 V346 M2384.1 333 V346 M2393.3 333 V346 M2402.6 333 V346 M2411.9 318 V346 M2421.2 333 V346 M2430.5 333 V346 M2439.7 333 V346 M2449.0 327 V346 M2458.3 333 V346 M2467.6 333 V346 M2476.9 333 V346 M2486.2 318 V346 M2495.4 333 V346 M2504.7 333 V346 M2514.0 333 V346 M2523.3 327 V346 M2532.6 333 V346 M2541.8 333 V346 M2551.1 333 V346 M2560.4 318 V346 M2569.7 333 V346 M2579.0 333 V346 M2588.2 333 V346 M2597.5 327 V346 M2606.8 333 V346 M2616.1 333 V346 M2625.4 333 V346 M2634.7 318 V346 M2643.9 333 V346 M2653.2 333 V346 M2662.5 333 V346 M2671.8 327 V346 M2681.1 333 V346 M2690.3 333 V346 M2699.6 333 V346 M2708.9 318 V346 M2718.2 333 V346 M2727.5 333 V346 M2736.7 333 V346 M2746.0 327 V346 M2755.3 333 V346 M2764.6 333 V346 M2773.9 333 V346 M2783.2 318 V346 M2792.4 333 V346 M2801.7 333 V346 M2811.0 333 V346 M2820.3 327 V346 M2829.6 333 V346 M2838.8 333 V346 M2848.1 333 V346 M2857.4 318 V346" stroke="#fbfbfb" stroke-width="2.4" fill="none"/>
<path d="M144.9 327 V346 M154.2 333 V346 M163.4 333 V346 M172.7 333 V346 M182.0 318 V346 M191.3 333 V346 M200.6 333 V346 M209.8 333 V346 M219.1 327 V346 M228.4 333 V346 M237.7 333 V346 M247.0 333 V346 M256.2 318 V346 M265.5 333 V346 M274.8 333 V346 M284.1 333 V346 M293.4 327 V346 M302.7 333 V346 M311.9 333 V346 M321.2 333 V346 M330.5 318 V346 M339.8 333 V346 M349.1 333 V346 M358.3 333 V346 M367.6 327 V346 M376.9 333 V346 M386.2 333 V346 M395.5 333 V346 M404.8 318 V346 M414.0 333 V346 M423.3 333 V346 M432.6 333 V346 M441.9 327 V346 M451.2 333 V346 M460.4 333 V346 M469.7 333 V346 M479.0 318 V346 M488.3 333 V346 M497.6 333 V346 M506.8 333 V346 M516.1 327 V346 M525.4 333 V346 M534.7 333 V346 M544.0 333 V346 M553.2 318 V346 M562.5 333 V346 M571.8 333 V346 M581.1 333 V346 M590.4 327 V346 M599.7 333 V346 M608.9 333 V346 M618.2 333 V346 M627.5 318 V346 M636.8 333 V346 M646.1 333 V346 M655.3 333 V346 M664.6 327 V346 M673.9 333 V346 M683.2 333 V346 M692.5 333 V346 M701.8 318 V346 M711.0 333 V346 M720.3 333 V346 M729.6 333 V346 M738.9 327 V346 M748.2 333 V346 M757.4 333 V346 M766.7 333 V346 M776.0 318 V346 M785.3 333 V346 M794.6 333 V346 M803.8 333 V346 M813.1 327 V346 M822.4 333 V346 M831.7 333 V346 M841.0 333 V346 M850.2 318 V346 M859.5 333 V346 M868.8 333 V346 M878.1 333 V346 M887.4 327 V346 M896.7 333 V346 M905.9 333 V346 M915.2 333 V346 M924.5 318 V346 M933.8 333 V346 M943.1 333 V346 M952.3 333 V346 M961.6 327 V346 M970.9 333 V346 M980.2 333 V346 M989.5 333 V346 M998.8 318 V346 M1008.0 333 V346 M1017.3 333 V346 M1026.6 333 V346 M1035.9 327 V346 M1045.2 333 V346 M1054.4 333 V346 M1063.7 333 V346 M1073.0 318 V346 M1082.3 333 V346 M1091.6 333 V346 M1100.8 333 V346 M1110.1 327 V346 M1119.4 333 V346 M1128.7 333 V346 M1138.0 333 V346 M1147.2 318 V346 M1156.5 333 V346 M1165.8 333 V346 M1175.1 333 V346 M1184.4 327 V346 M1193.7 333 V346 M1202.9 333 V346 M1212.2 333 V346 M1221.5 318 V346 M1230.8 333 V346 M1240.1 333 V346 M1249.3 333 V346 M1258.6 327 V346 M1267.9 333 V346 M1277.2 333 V346 M1286.5 333 V346 M1295.8 318 V346 M1305.0 333 V346 M1314.3 333 V346 M1323.6 333 V346 M1332.9 327 V346 M1342.2 333 V346 M1351.4 333 V346 M1360.7 333 V346 M1370.0 318 V346 M1379.3 333 V346 M1388.6 333 V346 M1397.8 333 V346 M1407.1 327 V346 M1416.4 333 V346 M1425.7 333 V346 M1435.0 333 V346 M1444.2 318 V346 M1453.5 333 V346 M1462.8 333 V346 M1472.1 333 V346 M1481.4 327 V346 M1490.7 333 V346 M1499.9 333 V346 M1509.2 333 V346 M1518.5 318 V346 M1527.8 333 V346 M1537.1 333 V346 M1546.3 333 V346 M1555.6 327 V346 M1564.9 333 V346 M1574.2 333 V346 M1583.5 333 V346 M1592.8 318 V346 M1602.0 333 V346 M1611.3 333 V346 M1620.6 333 V346 M1629.9 327 V346 M1639.2 333 V346 M1648.4 333 V346 M1657.7 333 V346 M1667.0 318 V346 M1676.3 333 V346 M1685.6 333 V346 M1694.8 333 V346 M1704.1 327 V346 M1713.4 333 V346 M1722.7 333 V346 M1732.0 333 V346 M1741.2 318 V346 M1750.5 333 V346 M1759.8 333 V346 M1769.1 333 V346 M1778.4 327 V346 M1787.7 333 V346 M1796.9 333 V346 M1806.2 333 V346 M1815.5 318 V346 M1824.8 333 V346 M1834.1 333 V346 M1843.3 333 V346 M1852.6 327 V346 M1861.9 333 V346 M1871.2 333 V346 M1880.5 333 V346 M1889.8 318 V346 M1899.0 333 V346 M1908.3 333 V346 M1917.6 333 V346 M1926.9 327 V346 M1936.2 333 V346 M1945.4 333 V346 M1954.7 333 V346 M1964.0 318 V346 M1973.3 333 V346 M1982.6 333 V346 M1991.8 333 V346 M2001.1 327 V346 M2010.4 333 V346 M2019.7 333 V346 M2029.0 333 V346 M2038.2 318 V346 M2047.5 333 V346 M2056.8 333 V346 M2066.1 333 V346 M2075.4 327 V346 M2084.7 333 V346 M2093.9 333 V346 M2103.2 333 V346 M2112.5 318 V346 M2121.8 333 V346 M2131.1 333 V346 M2140.3 333 V346 M2149.6 327 V346 M2158.9 333 V346 M2168.2 333 V346 M2177.5 333 V346 M2186.8 318 V346 M2196.0 333 V346 M2205.3 333 V346 M2214.6 333 V346 M2223.9 327 V346 M2233.2 333 V346 M2242.4 333 V346 M2251.7 333 V346 M2261.0 318 V346 M2270.3 333 V346 M2279.6 333 V346 M2288.8 333 V346 M2298.1 327 V346 M2307.4 333 V346 M2316.7 333 V346 M2326.0 333 V346 M2335.2 318 V346 M2344.5 333 V346 M2353.8 333 V346 M2363.1 333 V346 M2372.4 327 V346 M2381.7 333 V346 M2390.9 333 V346 M2400.2 333 V346 M2409.5 318 V346 M2418.8 333 V346 M2428.1 333 V346 M2437.3 333 V346 M2446.6 327 V346 M2455.9 333 V346 M2465.2 333 V346 M2474.5 333 V346 M2483.8 318 V346 M2493.0 333 V346 M2502.3 333 V346 M2511.6 333 V346 M2520.9 327 V346 M2530.2 333 V346 M2539.4 333 V346 M2548.7 333 V346 M2558.0 318 V346 M2567.3 333 V346 M2576.6 333 V346 M2585.8 333 V346 M2595.1 327 V346 M2604.4 333 V346 M2613.7 333 V346 M2623.0 333 V346 M2632.2 318 V346 M2641.5 333 V346 M2650.8 333 V346 M2660.1 333 V346 M2669.4 327 V346 M2678.7 333 V346 M2687.9 333 V346 M2697.2 333 V346 M2706.5 318 V346 M2715.8 333 V346 M2725.1 333 V346 M2734.3 333 V346 M2743.6 327 V346 M2752.9 333 V346 M2762.2 333 V346 M2771.5 333 V346 M2780.8 318 V346 M2790.0 333 V346 M2799.3 333 V346 M2808.6 333 V346 M2817.9 327 V346 M2827.2 333 V346 M2836.4 333 V346 M2845.7 333 V346 M2855.0 318 V346" stroke="#a4a4a4" stroke-width="2" fill="none"/>
<path d="M2861 302.6 H2875 M2861 311.9 H2875 M2861 321.1 H2890 M2861 330.4 H2875 M2861 339.7 H2875 M2861 349.0 H2875 M2861 358.3 H2881 M2861 367.6 H2875 M2861 376.8 H2875 M2861 386.1 H2875 M2861 395.4 H2890 M2861 404.7 H2875 M2861 414.0 H2875 M2861 423.2 H2875 M2861 432.5 H2881 M2861 441.8 H2875 M2861 451.1 H2875 M2861 460.4 H2875 M2861 469.6 H2890 M2861 478.9 H2875 M2861 488.2 H2875 M2861 497.5 H2875 M2861 506.8 H2881 M2861 516.1 H2875 M2861 525.3 H2875 M2861 534.6 H2875 M2861 543.9 H2890 M2861 553.2 H2875 M2861 562.5 H2875 M2861 571.7 H2875 M2861 581.0 H2881 M2861 590.3 H2875 M2861 599.6 H2875 M2861 608.9 H2875 M2861 618.1 H2890 M2861 627.4 H2875 M2861 636.7 H2875 M2861 646.0 H2875 M2861 655.3 H2881 M2861 664.6 H2875 M2861 673.8 H2875 M2861 683.1 H2875 M2861 692.4 H2890 M2861 701.7 H2875 M2861 711.0 H2875 M2861 720.2 H2875 M2861 729.5 H2881 M2861 738.8 H2875 M2861 748.1 H2875 M2861 757.4 H2875 M2861 766.6 H2890 M2861 775.9 H2875 M2861 785.2 H2875 M2861 794.5 H2875 M2861 803.8 H2881 M2861 813.1 H2875 M2861 822.3 H2875 M2861 831.6 H2875 M2861 840.9 H2890 M2861 850.2 H2875 M2861 859.5 H2875 M2861 868.7 H2875 M2861 878.0 H2881 M2861 887.3 H2875 M2861 896.6 H2875 M2861 905.9 H2875 M2861 915.1 H2890 M2861 924.4 H2875 M2861 933.7 H2875 M2861 943.0 H2875 M2861 952.3 H2881 M2861 961.6 H2875 M2861 970.8 H2875 M2861 980.1 H2875 M2861 989.4 H2890 M2861 998.7 H2875 M2861 1008.0 H2875 M2861 1017.2 H2875 M2861 1026.5 H2881 M2861 1035.8 H2875 M2861 1045.1 H2875 M2861 1054.4 H2875 M2861 1063.7 H2890 M2861 1072.9 H2875 M2861 1082.2 H2875 M2861 1091.5 H2875 M2861 1100.8 H2881 M2861 1110.1 H2875 M2861 1119.3 H2875 M2861 1128.6 H2875 M2861 1137.9 H2890 M2861 1147.2 H2875 M2861 1156.5 H2875 M2861 1165.7 H2875 M2861 1175.0 H2881 M2861 1184.3 H2875 M2861 1193.6 H2875 M2861 1202.9 H2875 M2861 1212.2 H2890 M2861 1221.4 H2875 M2861 1230.7 H2875 M2861 1240.0 H2875 M2861 1249.3 H2881 M2861 1258.6 H2875 M2861 1267.8 H2875 M2861 1277.1 H2875 M2861 1286.4 H2890 M2861 1295.7 H2875 M2861 1305.0 H2875 M2861 1314.2 H2875 M2861 1323.5 H2881 M2861 1332.8 H2875 M2861 1342.1 H2875 M2861 1351.4 H2875 M2861 1360.7 H2890 M2861 1369.9 H2875 M2861 1379.2 H2875 M2861 1388.5 H2875 M2861 1397.8 H2881 M2861 1407.1 H2875 M2861 1416.3 H2875 M2861 1425.6 H2875 M2861 1434.9 H2890 M2861 1444.2 H2875 M2861 1453.5 H2875 M2861 1462.7 H2875 M2861 1472.0 H2881 M2861 1481.3 H2875 M2861 1490.6 H2875 M2861 1499.9 H2875 M2861 1509.2 H2890 M2861 1518.4 H2875 M2861 1527.7 H2875 M2861 1537.0 H2875 M2861 1546.3 H2881 M2861 1555.6 H2875 M2861 1564.8 H2875 M2861 1574.1 H2875 M2861 1583.4 H2890 M2861 1592.7 H2875 M2861 1602.0 H2875 M2861 1611.2 H2875 M2861 1620.5 H2881 M2861 1629.8 H2875 M2861 1639.1 H2875 M2861 1648.4 H2875 M2861 1657.7 H2890 M2861 1666.9 H2875 M2861 1676.2 H2875 M2861 1685.5 H2875 M2861 1694.8 H2881 M2861 1704.1 H2875 M2861 1713.3 H2875 M2861 1722.6 H2875 M2861 1731.9 H2890 M2861 1741.2 H2875 M2861 1750.5 H2875 M2861 1759.7 H2875 M2861 1769.0 H2881 M2861 1778.3 H2875 M2861 1787.6 H2875 M2861 1796.9 H2875 M2861 1806.2 H2890 M2861 1815.4 H2875 M2861 1824.7 H2875 M2861 1834.0 H2875 M2861 1843.3 H2881 M2861 1852.6 H2875 M2861 1861.8 H2875 M2861 1871.1 H2875 M2861 1880.4 H2890 M2861 1889.7 H2875 M2861 1899.0 H2875 M2861 1908.2 H2875 M2861 1917.5 H2881 M2861 1926.8 H2875 M2861 1936.1 H2875 M2861 1945.4 H2875 M2861 1954.7 H2890 M2861 1963.9 H2875 M2861 1973.2 H2875 M2861 1982.5 H2875 M2861 1991.8 H2881 M2861 2001.1 H2875 M2861 2010.3 H2875 M2861 2019.6 H2875 M2861 2028.9 H2890 M2861 2038.2 H2875 M2861 2047.5 H2875 M2861 2056.7 H2875 M2861 2066.0 H2881 M2861 2075.3 H2875 M2861 2084.6 H2875 M2861 2093.9 H2875 M2861 2103.2 H2890 M2861 2112.4 H2875 M2861 2121.7 H2875 M2861 2131.0 H2875 M2861 2140.3 H2881 M2861 2149.6 H2875 M2861 2158.8 H2875 M2861 2168.1 H2875 M2861 2177.4 H2890 M2861 2186.7 H2875 M2861 2196.0 H2875 M2861 2205.2 H2875 M2861 2214.5 H2881 M2861 2223.8 H2875 M2861 2233.1 H2875 M2861 2242.4 H2875 M2861 2251.7 H2890 M2861 2260.9 H2875 M2861 2270.2 H2875 M2861 2279.5 H2875 M2861 2288.8 H2881 M2861 2298.1 H2875 M2861 2307.3 H2875 M2861 2316.6 H2875 M2861 2325.9 H2890 M2861 2335.2 H2875 M2861 2344.5 H2875 M2861 2353.7 H2875 M2861 2363.0 H2881 M2861 2372.3 H2875 M2861 2381.6 H2875 M2861 2390.9 H2875 M2861 2400.2 H2890 M2861 2409.4 H2875 M2861 2418.7 H2875 M2861 2428.0 H2875 M2861 2437.3 H2881 M2861 2446.6 H2875 M2861 2455.8 H2875 M2861 2465.1 H2875 M2861 2474.4 H2890 M2861 2483.7 H2875 M2861 2493.0 H2875 M2861 2502.2 H2875 M2861 2511.5 H2881 M2861 2520.8 H2875 M2861 2530.1 H2875 M2861 2539.4 H2875 M2861 2548.7 H2890 M2861 2557.9 H2875 M2861 2567.2 H2875 M2861 2576.5 H2875 M2861 2585.8 H2881 M2861 2595.1 H2875 M2861 2604.3 H2875 M2861 2613.6 H2875 M2861 2622.9 H2890 M2861 2632.2 H2875" stroke="#fbfbfb" stroke-width="2.4" fill="none"/>
<path d="M2861 300.2 H2875 M2861 309.5 H2875 M2861 318.8 H2890 M2861 328.0 H2875 M2861 337.3 H2875 M2861 346.6 H2875 M2861 355.9 H2881 M2861 365.2 H2875 M2861 374.4 H2875 M2861 383.7 H2875 M2861 393.0 H2890 M2861 402.3 H2875 M2861 411.6 H2875 M2861 420.8 H2875 M2861 430.1 H2881 M2861 439.4 H2875 M2861 448.7 H2875 M2861 458.0 H2875 M2861 467.2 H2890 M2861 476.5 H2875 M2861 485.8 H2875 M2861 495.1 H2875 M2861 504.4 H2881 M2861 513.7 H2875 M2861 522.9 H2875 M2861 532.2 H2875 M2861 541.5 H2890 M2861 550.8 H2875 M2861 560.1 H2875 M2861 569.3 H2875 M2861 578.6 H2881 M2861 587.9 H2875 M2861 597.2 H2875 M2861 606.5 H2875 M2861 615.8 H2890 M2861 625.0 H2875 M2861 634.3 H2875 M2861 643.6 H2875 M2861 652.9 H2881 M2861 662.2 H2875 M2861 671.4 H2875 M2861 680.7 H2875 M2861 690.0 H2890 M2861 699.3 H2875 M2861 708.6 H2875 M2861 717.8 H2875 M2861 727.1 H2881 M2861 736.4 H2875 M2861 745.7 H2875 M2861 755.0 H2875 M2861 764.2 H2890 M2861 773.5 H2875 M2861 782.8 H2875 M2861 792.1 H2875 M2861 801.4 H2881 M2861 810.7 H2875 M2861 819.9 H2875 M2861 829.2 H2875 M2861 838.5 H2890 M2861 847.8 H2875 M2861 857.1 H2875 M2861 866.3 H2875 M2861 875.6 H2881 M2861 884.9 H2875 M2861 894.2 H2875 M2861 903.5 H2875 M2861 912.8 H2890 M2861 922.0 H2875 M2861 931.3 H2875 M2861 940.6 H2875 M2861 949.9 H2881 M2861 959.2 H2875 M2861 968.4 H2875 M2861 977.7 H2875 M2861 987.0 H2890 M2861 996.3 H2875 M2861 1005.6 H2875 M2861 1014.8 H2875 M2861 1024.1 H2881 M2861 1033.4 H2875 M2861 1042.7 H2875 M2861 1052.0 H2875 M2861 1061.2 H2890 M2861 1070.5 H2875 M2861 1079.8 H2875 M2861 1089.1 H2875 M2861 1098.4 H2881 M2861 1107.7 H2875 M2861 1116.9 H2875 M2861 1126.2 H2875 M2861 1135.5 H2890 M2861 1144.8 H2875 M2861 1154.1 H2875 M2861 1163.3 H2875 M2861 1172.6 H2881 M2861 1181.9 H2875 M2861 1191.2 H2875 M2861 1200.5 H2875 M2861 1209.8 H2890 M2861 1219.0 H2875 M2861 1228.3 H2875 M2861 1237.6 H2875 M2861 1246.9 H2881 M2861 1256.2 H2875 M2861 1265.4 H2875 M2861 1274.7 H2875 M2861 1284.0 H2890 M2861 1293.3 H2875 M2861 1302.6 H2875 M2861 1311.8 H2875 M2861 1321.1 H2881 M2861 1330.4 H2875 M2861 1339.7 H2875 M2861 1349.0 H2875 M2861 1358.2 H2890 M2861 1367.5 H2875 M2861 1376.8 H2875 M2861 1386.1 H2875 M2861 1395.4 H2881 M2861 1404.7 H2875 M2861 1413.9 H2875 M2861 1423.2 H2875 M2861 1432.5 H2890 M2861 1441.8 H2875 M2861 1451.1 H2875 M2861 1460.3 H2875 M2861 1469.6 H2881 M2861 1478.9 H2875 M2861 1488.2 H2875 M2861 1497.5 H2875 M2861 1506.8 H2890 M2861 1516.0 H2875 M2861 1525.3 H2875 M2861 1534.6 H2875 M2861 1543.9 H2881 M2861 1553.2 H2875 M2861 1562.4 H2875 M2861 1571.7 H2875 M2861 1581.0 H2890 M2861 1590.3 H2875 M2861 1599.6 H2875 M2861 1608.8 H2875 M2861 1618.1 H2881 M2861 1627.4 H2875 M2861 1636.7 H2875 M2861 1646.0 H2875 M2861 1655.2 H2890 M2861 1664.5 H2875 M2861 1673.8 H2875 M2861 1683.1 H2875 M2861 1692.4 H2881 M2861 1701.7 H2875 M2861 1710.9 H2875 M2861 1720.2 H2875 M2861 1729.5 H2890 M2861 1738.8 H2875 M2861 1748.1 H2875 M2861 1757.3 H2875 M2861 1766.6 H2881 M2861 1775.9 H2875 M2861 1785.2 H2875 M2861 1794.5 H2875 M2861 1803.8 H2890 M2861 1813.0 H2875 M2861 1822.3 H2875 M2861 1831.6 H2875 M2861 1840.9 H2881 M2861 1850.2 H2875 M2861 1859.4 H2875 M2861 1868.7 H2875 M2861 1878.0 H2890 M2861 1887.3 H2875 M2861 1896.6 H2875 M2861 1905.8 H2875 M2861 1915.1 H2881 M2861 1924.4 H2875 M2861 1933.7 H2875 M2861 1943.0 H2875 M2861 1952.2 H2890 M2861 1961.5 H2875 M2861 1970.8 H2875 M2861 1980.1 H2875 M2861 1989.4 H2881 M2861 1998.7 H2875 M2861 2007.9 H2875 M2861 2017.2 H2875 M2861 2026.5 H2890 M2861 2035.8 H2875 M2861 2045.1 H2875 M2861 2054.3 H2875 M2861 2063.6 H2881 M2861 2072.9 H2875 M2861 2082.2 H2875 M2861 2091.5 H2875 M2861 2100.8 H2890 M2861 2110.0 H2875 M2861 2119.3 H2875 M2861 2128.6 H2875 M2861 2137.9 H2881 M2861 2147.2 H2875 M2861 2156.4 H2875 M2861 2165.7 H2875 M2861 2175.0 H2890 M2861 2184.3 H2875 M2861 2193.6 H2875 M2861 2202.8 H2875 M2861 2212.1 H2881 M2861 2221.4 H2875 M2861 2230.7 H2875 M2861 2240.0 H2875 M2861 2249.2 H2890 M2861 2258.5 H2875 M2861 2267.8 H2875 M2861 2277.1 H2875 M2861 2286.4 H2881 M2861 2295.7 H2875 M2861 2304.9 H2875 M2861 2314.2 H2875 M2861 2323.5 H2890 M2861 2332.8 H2875 M2861 2342.1 H2875 M2861 2351.3 H2875 M2861 2360.6 H2881 M2861 2369.9 H2875 M2861 2379.2 H2875 M2861 2388.5 H2875 M2861 2397.8 H2890 M2861 2407.0 H2875 M2861 2416.3 H2875 M2861 2425.6 H2875 M2861 2434.9 H2881 M2861 2444.2 H2875 M2861 2453.4 H2875 M2861 2462.7 H2875 M2861 2472.0 H2890 M2861 2481.3 H2875 M2861 2490.6 H2875 M2861 2499.8 H2875 M2861 2509.1 H2881 M2861 2518.4 H2875 M2861 2527.7 H2875 M2861 2537.0 H2875 M2861 2546.2 H2890 M2861 2555.5 H2875 M2861 2564.8 H2875 M2861 2574.1 H2875 M2861 2583.4 H2881 M2861 2592.7 H2875 M2861 2601.9 H2875 M2861 2611.2 H2875 M2861 2620.5 H2890 M2861 2629.8 H2875" stroke="#a4a4a4" stroke-width="2" fill="none"/>
<text x="332.5" y="318" font-size="24" font-weight="200" font-family='"DejaVu Sans","Liberation Sans",sans-serif' fill="#5e5e5e" text-anchor="middle" >-4</text>
<text x="481.0" y="318" font-size="24" font-weight="200" font-family='"DejaVu Sans","Liberation Sans",sans-serif' fill="#5e5e5e" text-anchor="middle" >-3</text>
<text x="629.5" y="318" font-size="24" font-weight="200" font-family='"DejaVu Sans","Liberation Sans",sans-serif' fill="#5e5e5e" text-anchor="middle" >-2</text>
<text x="778.0" y="318" font-size="24" font-weight="200" font-family='"DejaVu Sans","Liberation Sans",sans-serif' fill="#5e5e5e" text-anchor="middle" >-1</text>
<text x="926.5" y="318" font-size="24" font-weight="200" font-family='"DejaVu Sans","Liberation Sans",sans-serif' fill="#5e5e5e" text-anchor="middle" >0</text>
<text x="1075.0" y="318" font-size="24" font-weight="200" font-family='"DejaVu Sans","Liberation Sans",sans-serif' fill="#5e5e5e" text-anchor="middle" >1</text>
<text x="1223.5" y="318" font-size="24" font-weight="200" font-family='"DejaVu Sans","Liberation Sans",sans-serif' fill="#5e5e5e" text-anchor="middle" >2</text>
<text x="1372.0" y="318" font-size="24" font-weight="200" font-family='"DejaVu Sans","Liberation Sans",sans-serif' fill="#5e5e5e" text-anchor="middle" >3</text>
<text x="1520.5" y="318" font-size="24" font-weight="200" font-family='"DejaVu Sans","Liberation Sans",sans-serif' fill="#5e5e5e" text-anchor="middle" >4</text>
<text x="1669.0" y="318" font-size="24" font-weight="200" font-family='"DejaVu Sans","Liberation Sans",sans-serif' fill="#5e5e5e" text-anchor="middle" >5</text>
<text x="1817.5" y="318" font-size="24" font-weight="200" font-family='"DejaVu Sans","Liberation Sans",sans-serif' fill="#5e5e5e" text-anchor="middle" >6</text>
<text x="1966.0" y="318" font-size="24" font-weight="200" font-family='"DejaVu Sans","Liberation Sans",sans-serif' fill="#5e5e5e" text-anchor="middle" >7</text>
<text x="2114.5" y="318" font-size="24" font-weight="200" font-family='"DejaVu Sans","Liberation Sans",sans-serif' fill="#5e5e5e" text-anchor="middle" >8</text>
<text x="2263.0" y="318" font-size="24" font-weight="200" font-family='"DejaVu Sans","Liberation Sans",sans-serif' fill="#5e5e5e" text-anchor="middle" >9</text>
<text x="2411.5" y="318" font-size="24" font-weight="200" font-family='"DejaVu Sans","Liberation Sans",sans-serif' fill="#5e5e5e" text-anchor="middle" >10</text>
<text x="2560.0" y="318" font-size="24" font-weight="200" font-family='"DejaVu Sans","Liberation Sans",sans-serif' fill="#5e5e5e" text-anchor="middle" >11</text>
<text x="2708.5" y="318" font-size="24" font-weight="200" font-family='"DejaVu Sans","Liberation Sans",sans-serif' fill="#5e5e5e" text-anchor="middle" >12</text>
<g transform="translate(2888 395.0) rotate(90)"><text x="0" y="0" font-size="24" font-weight="200" font-family='"DejaVu Sans","Liberation Sans",sans-serif' fill="#5e5e5e" text-anchor="middle" >-1</text></g>
<g transform="translate(2888 543.5) rotate(90)"><text x="0" y="0" font-size="24" font-weight="200" font-family='"DejaVu Sans","Liberation Sans",sans-serif' fill="#5e5e5e" text-anchor="middle" >0</text></g>
<g transform="translate(2888 692.0) rotate(90)"><text x="0" y="0" font-size="24" font-weight="200" font-family='"DejaVu Sans","Liberation Sans",sans-serif' fill="#5e5e5e" text-anchor="middle" >1</text></g>
<g transform="translate(2888 840.5) rotate(90)"><text x="0" y="0" font-size="24" font-weight="200" font-family='"DejaVu Sans","Liberation Sans",sans-serif' fill="#5e5e5e" text-anchor="middle" >2</text></g>
<g transform="translate(2888 989.0) rotate(90)"><text x="0" y="0" font-size="24" font-weight="200" font-family='"DejaVu Sans","Liberation Sans",sans-serif' fill="#5e5e5e" text-anchor="middle" >3</text></g>
<g transform="translate(2888 1137.5) rotate(90)"><text x="0" y="0" font-size="24" font-weight="200" font-family='"DejaVu Sans","Liberation Sans",sans-serif' fill="#5e5e5e" text-anchor="middle" >4</text></g>
<g transform="translate(2888 1286.0) rotate(90)"><text x="0" y="0" font-size="24" font-weight="200" font-family='"DejaVu Sans","Liberation Sans",sans-serif' fill="#5e5e5e" text-anchor="middle" >5</text></g>
<g transform="translate(2888 1434.5) rotate(90)"><text x="0" y="0" font-size="24" font-weight="200" font-family='"DejaVu Sans","Liberation Sans",sans-serif' fill="#5e5e5e" text-anchor="middle" >6</text></g>
<g transform="translate(2888 1583.0) rotate(90)"><text x="0" y="0" font-size="24" font-weight="200" font-family='"DejaVu Sans","Liberation Sans",sans-serif' fill="#5e5e5e" text-anchor="middle" >7</text></g>
<g transform="translate(2888 1731.5) rotate(90)"><text x="0" y="0" font-size="24" font-weight="200" font-family='"DejaVu Sans","Liberation Sans",sans-serif' fill="#5e5e5e" text-anchor="middle" >8</text></g>
<g transform="translate(2888 1880.0) rotate(90)"><text x="0" y="0" font-size="24" font-weight="200" font-family='"DejaVu Sans","Liberation Sans",sans-serif' fill="#5e5e5e" text-anchor="middle" >9</text></g>
<g transform="translate(2888 2028.5) rotate(90)"><text x="0" y="0" font-size="24" font-weight="200" font-family='"DejaVu Sans","Liberation Sans",sans-serif' fill="#5e5e5e" text-anchor="middle" >10</text></g>
<g transform="translate(2888 2177.0) rotate(90)"><text x="0" y="0" font-size="24" font-weight="200" font-family='"DejaVu Sans","Liberation Sans",sans-serif' fill="#5e5e5e" text-anchor="middle" >11</text></g>
<g transform="translate(2888 2325.5) rotate(90)"><text x="0" y="0" font-size="24" font-weight="200" font-family='"DejaVu Sans","Liberation Sans",sans-serif' fill="#5e5e5e" text-anchor="middle" >12</text></g>
<g transform="translate(2888 2474.0) rotate(90)"><text x="0" y="0" font-size="24" font-weight="200" font-family='"DejaVu Sans","Liberation Sans",sans-serif' fill="#5e5e5e" text-anchor="middle" >13</text></g>
<path d="M2592.5 290 V346" stroke="#8a8a8a" stroke-width="3"/>
<path d="M2860 1530 H2916" stroke="#8a8a8a" stroke-width="3"/>
<rect x="2902" y="290" width="14" height="2347" fill="#fff" fill-opacity=".35"/>
<rect x="155" y="301" width="180" height="36" fill="#fff"/>
<text x="165" y="329" font-size="27" font-weight="200" font-family='"DejaVu Sans","Liberation Sans",sans-serif' fill="#5a5a5a" text-anchor="start" textLength="160" lengthAdjust="spacingAndGlyphs" >11.230 , 6.660</text>
<rect x="124" y="290" width="2792" height="22" fill="url(#inT)"/>
<rect x="124" y="290" width="26" height="2347" fill="url(#inL)"/>
<rect x="124" y="2559" width="2792" height="10" fill="#000" fill-opacity="0"/>
</g></svg>
<div class="grp" style="left:36px;top:200px;width:272px;height:73px;"></div>
<div class="grp" style="left:319px;top:200px;width:141px;height:73px;"></div>
<div class="grp" style="left:469px;top:200px;width:208px;height:73px;"></div>
<div class="grp" style="left:686px;top:200px;width:141px;height:73px;"></div>
<div class="grp" style="left:842px;top:200px;width:339px;height:73px;"></div>
<div class="grp" style="left:1983px;top:200px;width:341px;height:73px;"></div>
<div class="grp" style="left:2333px;top:200px;width:207px;height:73px;"></div>
<div class="grp" style="left:2549px;top:200px;width:74px;height:73px;"></div>
<div class="grp" style="left:2633px;top:200px;width:407px;height:73px;"></div>
<div class="grp" style="left:3051px;top:200px;width:206px;height:73px;"></div>
<div class="grp" style="left:3268px;top:200px;width:273px;height:73px;"></div>
<div class="grp" style="left:37px;top:293px;width:70px;height:135px;"></div>
<div class="grp" style="left:37px;top:442px;width:70px;height:269px;"></div>
<div class="grp" style="left:37px;top:726px;width:70px;height:201px;"></div>
<div class="grp" style="left:37px;top:945px;width:70px;height:68px;"></div>
<div class="grp" style="left:37px;top:1029px;width:70px;height:133px;"></div>
<div class="grp" style="left:37px;top:1178px;width:70px;height:69px;"></div>
<div class="grp" style="left:37px;top:1312px;width:70px;height:200px;"></div>
<div class="grp" style="left:37px;top:1576px;width:70px;height:138px;"></div>
<div class="grp" style="left:37px;top:2699px;width:137px;height:72px;"></div>
<div class="grp" style="left:186px;top:2699px;width:139px;height:72px;"></div>
<div class="grp" style="left:336px;top:2699px;width:139px;height:72px;"></div>
<div class="grp" style="left:487px;top:2699px;width:137px;height:72px;"></div>
<div class="grp" style="left:637px;top:2699px;width:138px;height:72px;"></div>
<div class="a" style="left:40px;top:295px;width:65px;height:65px;border:4px solid #2c2c2c;border-radius:16px;background:linear-gradient(135deg,#e4e4e4,#c6c6c6)"></div>
<div class="a" style="left:40px;top:1314px;width:65px;height:65px;border:4px solid #2c2c2c;border-radius:16px;background:linear-gradient(135deg,#e4e4e4,#c6c6c6)"></div>
<div class="track" style="left:2916px;top:290px;width:46px;height:2348px"></div>
<div class="trackh" style="left:125px;top:2637px;width:2793px;height:45px"></div>
<div class="sbtn" style="left:2923px;top:294px;width:34px;height:39px"></div>
<div class="sbtn" style="left:2923px;top:2594px;width:34px;height:40px"></div>
<div class="sbtn" style="left:2923px;top:1322px;width:34px;height:347px"></div>
<div class="sbtn" style="left:128px;top:2642px;width:38px;height:35px"></div>
<div class="sbtn" style="left:2873px;top:2642px;width:42px;height:35px"></div>
<div class="sbtn" style="left:1296px;top:2643px;width:496px;height:35px"></div>
<div class="a" style="left:2979px;top:289px;width:562px;height:2393px;background:#fff;border-radius:28px;box-shadow:inset 0 3px 10px 3px rgba(60,60,60,.72)"></div>
<div class="box" style="left:3024px;top:402px;width:474px;height:80px;"></div>
<div class="box" style="left:3024px;top:496px;width:430px;height:300px;"></div>
<div class="sel" style="left:3027px;top:573px;width:427px;height:71px"></div>
<div class="track" style="left:3457px;top:496px;width:41px;height:300px"></div>
<div class="sbtn" style="left:3460px;top:498px;width:36px;height:42px"></div>
<div class="sbtn" style="left:3460px;top:545px;width:36px;height:137px"></div>
<div class="sbtn" style="left:3460px;top:752px;width:36px;height:42px"></div>
<div class="inp" style="left:3224px;top:814px;width:144px;height:60px"></div>
<div class="inp" style="left:3224px;top:878px;width:144px;height:60px"></div>
<div class="box" style="left:3024px;top:1008px;width:475px;height:145px;"></div>
<div class="sel" style="left:3026px;top:1081px;width:473px;height:73px"></div>
<div class="box" style="left:3024px;top:1219px;width:466px;height:146px;"></div>
<div class="sel" style="left:3025px;top:1220px;width:234px;height:73px"></div>
<div class="inp" style="left:3240px;top:1434px;width:144px;height:59px"></div>
<div class="box" style="left:3024px;top:1561px;width:430px;height:300px;"></div>
<div class="sel" style="left:3027px;top:1637px;width:427px;height:73px"></div>
<div class="track" style="left:3457px;top:1561px;width:41px;height:300px"></div>
<div class="sbtn" style="left:3460px;top:1563px;width:36px;height:42px"></div>
<div class="sbtn" style="left:3460px;top:1611px;width:36px;height:163px"></div>
<div class="sbtn" style="left:3460px;top:1817px;width:36px;height:42px"></div>
<div class="a" style="left:3479px;top:2699px;width:62px;height:62px;border-radius:50%;background:#f4f4f4;box-shadow:0 2px 3px #222, inset 0 0 4px #999"></div>
<div class="a" style="left:3487px;top:2707px;width:46px;height:46px;border-radius:50%;background:radial-gradient(circle at 40% 36%,#fff 0,#fff 18%,rgba(255,255,255,0) 66%),conic-gradient(from 0deg,#a0ff00,#ffd000 45deg,#ff0000 90deg,#ff00c0 135deg,#8000ff 180deg,#0020ff 225deg,#00e0ff 270deg,#00ff40 315deg,#a0ff00 360deg)"></div>
<svg class="a" style="left:0;top:0" width="3600" height="2832" viewBox="0 0 3600 2832"><defs><radialGradient id="tico" cx=".35" cy=".3" r=".8"><stop offset="0" stop-color="#fff"/><stop offset=".45" stop-color="#8fd0dc"/><stop offset="1" stop-color="#2f93ad"/></radialGradient><linearGradient id="redb" x1="0" x2="1" y1="0" y2="1"><stop offset="0" stop-color="#f0a080"/><stop offset=".4" stop-color="#e0502c"/><stop offset="1" stop-color="#b8300f"/></linearGradient><linearGradient id="blub" x1="0" x2="1" y1="0" y2="1"><stop offset="0" stop-color="#7aa4f8"/><stop offset=".4" stop-color="#2f62e2"/><stop offset="1" stop-color="#1c46c4"/></linearGradient><linearGradient id="bluesq" x1="0" x2="0" y1="0" y2="1"><stop offset="0" stop-color="#3f9bf5"/><stop offset="1" stop-color="#e8f3ff"/></linearGradient><linearGradient id="sdg" x1="0" x2="1" y1="0" y2="1"><stop offset="0" stop-color="#2d8cf0"/><stop offset="1" stop-color="#0d3fb0"/></linearGradient></defs>
<circle cx="47" cy="89" r="22.5" fill="url(#tico)"/>
<text x="47" y="106" font-size="46" font-weight="normal" font-family='"Liberation Serif",serif' fill="#fff" text-anchor="middle" font-style="italic">S</text>
<text x="81" y="110" font-size="43" font-weight="bold" font-family='"Liberation Sans",sans-serif' fill="#0a246a" text-anchor="start" textLength="932" lengthAdjust="spacingAndGlyphs" opacity=".8">Silhouette Studio Designer Edition: Pirate_shirt.studio</text>
<text x="79" y="108" font-size="43" font-weight="bold" font-family='"Liberation Sans",sans-serif' fill="#fff" text-anchor="start" textLength="932" lengthAdjust="spacingAndGlyphs" >Silhouette Studio Designer Edition: Pirate_shirt.studio</text>
<rect x="3366" y="62" width="56" height="57" rx="9" ry="9" fill="url(#blub)" stroke="#fff" stroke-width="3"/>
<rect x="3431" y="62" width="56" height="57" rx="9" ry="9" fill="url(#blub)" stroke="#fff" stroke-width="3"/>
<rect x="3495" y="62" width="56" height="57" rx="9" ry="9" fill="url(#redb)" stroke="#fff" stroke-width="3"/>
<rect x="3379" y="98" width="21" height="9" fill="#fff"/>
<rect x="3445" y="76" width="29" height="29" fill="none" stroke="#fff" stroke-width="4"/><rect x="3443" y="74" width="33" height="9" fill="#fff"/>
<path d="M3509 76 L3537 105 M3537 76 L3509 105" stroke="#fff" stroke-width="7" stroke-linecap="butt"/>
<text x="34" y="165" font-size="32" font-weight="normal" font-family='"Liberation Sans",sans-serif' fill="#000" text-anchor="start" textLength="43" lengthAdjust="spacingAndGlyphs" >File</text>
<text x="112" y="165" font-size="32" font-weight="normal" font-family='"Liberation Sans",sans-serif' fill="#000" text-anchor="start" textLength="48" lengthAdjust="spacingAndGlyphs" >Edit</text>
<text x="196" y="165" font-size="32" font-weight="normal" font-family='"Liberation Sans",sans-serif' fill="#000" text-anchor="start" textLength="87" lengthAdjust="spacingAndGlyphs" >Object</text>
<text x="318" y="165" font-size="32" font-weight="normal" font-family='"Liberation Sans",sans-serif' fill="#000" text-anchor="start" textLength="61" lengthAdjust="spacingAndGlyphs" >View</text>
<text x="413" y="165" font-size="32" font-weight="normal" font-family='"Liberation Sans",sans-serif' fill="#000" text-anchor="start" textLength="58" lengthAdjust="spacingAndGlyphs" >Help</text>
<path d="M125 2637 L160 2578 Q165 2569.5 175 2569.5 H436 Q445 2569.5 449 2577 L480 2637 Z" fill="#7f7f7f" stroke="#6a6a6a" stroke-width="1.5"/>
<path d="M848 2637 L822 2581 H836 Q843 2581 846 2587 L870 2637 Z" fill="#8c8c8c"/>
<path d="M451 2637 L480 2580 Q485 2570 495 2570 H811 Q820 2570 824 2578 L853 2637 Z" fill="#f7f7f2" stroke="#8a8a8a" stroke-width="1.5"/>
<text x="168" y="2616" font-size="34" font-weight="200" font-family='"DejaVu Sans","Liberation Sans",sans-serif' fill="#dedede" text-anchor="start" textLength="221" lengthAdjust="spacingAndGlyphs" >Untitled.studio</text>
<text x="491" y="2616" font-size="34" font-weight="200" font-family='"DejaVu Sans","Liberation Sans",sans-serif' fill="#222" text-anchor="start" textLength="270" lengthAdjust="spacingAndGlyphs" >Pirate_shirt.studio</text>
<circle cx="427" cy="2600" r="20" fill="#bdbdbd"/><path d="M416 2589 L438 2611 M438 2589 L416 2611" stroke="#111" stroke-width="4"/>
<circle cx="799" cy="2600" r="20" fill="#bdbdbd"/><path d="M788 2589 L810 2611 M810 2589 L788 2611" stroke="#111" stroke-width="4"/>
<path d="M2929.5 319.775 L2940 308.225 L2950.5 319.775" fill="none" stroke="#33467a" stroke-width="6"/>
<path d="M2929.5 2608.225 L2940 2619.775 L2950.5 2608.225" fill="none" stroke="#33467a" stroke-width="6"/>
<path d="M152.775 2649.5 L141.225 2660 L152.775 2670.5" fill="none" stroke="#33467a" stroke-width="6"/>
<path d="M2888.225 2649.5 L2899.775 2660 L2888.225 2670.5" fill="none" stroke="#33467a" stroke-width="6"/>
<path d="M3467.5 524.775 L3478 513.225 L3488.5 524.775" fill="none" stroke="#33467a" stroke-width="6"/>
<path d="M3467.5 767.225 L3478 778.775 L3488.5 767.225" fill="none" stroke="#33467a" stroke-width="6"/>
<path d="M3467.5 1589.775 L3478 1578.225 L3488.5 1589.775" fill="none" stroke="#33467a" stroke-width="6"/>
<path d="M3467.5 1832.225 L3478 1843.775 L3488.5 1832.225" fill="none" stroke="#33467a" stroke-width="6"/>
<path d="M2931 1486 H2949 M2931 1492 H2949 M2931 1498 H2949 M2931 1504 H2949" stroke="#8da6ea" stroke-width="2.4"/>
<path d="M3469 604 H3487 M3469 610 H3487 M3469 616 H3487 M3469 622 H3487" stroke="#8da6ea" stroke-width="2.4"/>
<path d="M3469 1683 H3487 M3469 1689 H3487 M3469 1695 H3487 M3469 1701 H3487" stroke="#8da6ea" stroke-width="2.4"/>
<path d="M1535 2651 V2669 M1541 2651 V2669 M1547 2651 V2669 M1553 2651 V2669" stroke="#8da6ea" stroke-width="2.4"/>
<text x="3011" y="355" font-size="40" font-weight="bold" font-family='"DejaVu Sans","Liberation Sans",sans-serif' fill="#111" text-anchor="start" textLength="95" lengthAdjust="spacingAndGlyphs" >Page</text>
<path d="M3478 325 L3512 359 M3512 325 L3478 359" stroke="#111" stroke-width="4.5"/>
<path d="M3007 372 H3513" stroke="#4a4a4a" stroke-width="2.5"/>
<text x="3044" y="453" font-size="29" font-weight="bold" font-family='"DejaVu Sans","Liberation Sans",sans-serif' fill="#4d6d89" text-anchor="start" textLength="297" lengthAdjust="spacingAndGlyphs" >Use Printer Setting</text>
<text x="3044" y="533" font-size="29" font-weight="bold" font-family='"DejaVu Sans","Liberation Sans",sans-serif' fill="#4d6d89" text-anchor="start" textLength="130" lengthAdjust="spacingAndGlyphs" >12"x12"</text>
<text x="3046" y="559" font-size="22" font-weight="normal" font-family='"DejaVu Sans","Liberation Sans",sans-serif' fill="#4c4c4c" text-anchor="start" textLength="214" lengthAdjust="spacingAndGlyphs" >12.000 x 12.000 in</text>
<text x="3044" y="606" font-size="29" font-weight="bold" font-family='"DejaVu Sans","Liberation Sans",sans-serif' fill="#4d6d89" text-anchor="start" textLength="96" lengthAdjust="spacingAndGlyphs" >Letter</text>
<text x="3046" y="631" font-size="22" font-weight="normal" font-family='"DejaVu Sans","Liberation Sans",sans-serif' fill="#4c4c4c" text-anchor="start" textLength="200" lengthAdjust="spacingAndGlyphs" >8.500 x 11.000 in</text>
<text x="3044" y="678" font-size="29" font-weight="bold" font-family='"DejaVu Sans","Liberation Sans",sans-serif' fill="#4d6d89" text-anchor="start" textLength="40" lengthAdjust="spacingAndGlyphs" >A4</text>
<text x="3046" y="703" font-size="22" font-weight="normal" font-family='"DejaVu Sans","Liberation Sans",sans-serif' fill="#4c4c4c" text-anchor="start" textLength="236" lengthAdjust="spacingAndGlyphs" >210.00 x 297.00 mm</text>
<text x="3044" y="750" font-size="29" font-weight="bold" font-family='"DejaVu Sans","Liberation Sans",sans-serif' fill="#4d6d89" text-anchor="start" textLength="40" lengthAdjust="spacingAndGlyphs" >A5</text>
<text x="3046" y="775" font-size="22" font-weight="normal" font-family='"DejaVu Sans","Liberation Sans",sans-serif' fill="#4c4c4c" text-anchor="start" textLength="236" lengthAdjust="spacingAndGlyphs" >148.00 x 210.00 mm</text>
<text x="3031" y="848" font-size="29" font-weight="bold" font-family='"DejaVu Sans","Liberation Sans",sans-serif' fill="#5a5a5a" text-anchor="start" textLength="89" lengthAdjust="spacingAndGlyphs" >Width</text>
<text x="3031" y="913" font-size="29" font-weight="bold" font-family='"DejaVu Sans","Liberation Sans",sans-serif' fill="#5a5a5a" text-anchor="start" textLength="101" lengthAdjust="spacingAndGlyphs" >Height</text>
<text x="3238" y="851" font-size="31" font-weight="normal" font-family='"DejaVu Sans","Liberation Sans",sans-serif' fill="#000" text-anchor="start" textLength="78" lengthAdjust="spacingAndGlyphs" >8.500</text>
<text x="3240" y="915" font-size="31" font-weight="normal" font-family='"DejaVu Sans","Liberation Sans",sans-serif' fill="#000" text-anchor="start" textLength="92" lengthAdjust="spacingAndGlyphs" >11.000</text>
<path d="M3382 834 L3392 822 L3402 834 Z M3382 854 L3392 866 L3402 854 Z" fill="#111"/>
<path d="M3382 898 L3392 886 L3402 898 Z M3382 918 L3392 930 L3402 918 Z" fill="#111"/>
<path d="M3399 1455 L3409 1443 L3419 1455 Z M3399 1474 L3409 1486 L3419 1474 Z" fill="#111"/>
<text x="3417" y="848" font-size="29" font-weight="normal" font-family='"DejaVu Sans","Liberation Sans",sans-serif' fill="#111" text-anchor="start" textLength="22" lengthAdjust="spacingAndGlyphs" >in</text>
<text x="3417" y="912" font-size="29" font-weight="normal" font-family='"DejaVu Sans","Liberation Sans",sans-serif' fill="#111" text-anchor="start" textLength="22" lengthAdjust="spacingAndGlyphs" >in</text>
<text x="3031" y="988" font-size="29" font-weight="bold" font-family='"DejaVu Sans","Liberation Sans",sans-serif' fill="#5a5a5a" text-anchor="start" textLength="263" lengthAdjust="spacingAndGlyphs" >Page Orientation</text>
<text x="3120" y="1057" font-size="29" font-weight="bold" font-family='"DejaVu Sans","Liberation Sans",sans-serif' fill="#4d6d89" text-anchor="start" textLength="165" lengthAdjust="spacingAndGlyphs" >Landscape</text>
<text x="3120" y="1129" font-size="29" font-weight="bold" font-family='"DejaVu Sans","Liberation Sans",sans-serif' fill="#4d6d89" text-anchor="start" textLength="120" lengthAdjust="spacingAndGlyphs" >Portrait</text>
<rect x="3037" y="1026" width="50" height="36" fill="#fff" stroke="#6e6e6e" stroke-width="2.6"/><path d="M3042 1039 V1031 H3050 M3074 1031 H3082 V1039 M3082 1049 V1057 H3074 M3050 1057 H3042 V1049" fill="none" stroke="#222" stroke-width="2.6"/>
<rect x="3044" y="1092" width="37" height="48" fill="#ccc" stroke="#6e6e6e" stroke-width="2.6"/><path d="M3049 1105 V1097 H3057 M3068 1097 H3076 V1105 M3076 1127 V1135 H3068 M3057 1135 H3049 V1127" fill="none" stroke="#222" stroke-width="2.6"/>
<text x="3031" y="1204" font-size="29" font-weight="bold" font-family='"DejaVu Sans","Liberation Sans",sans-serif' fill="#5a5a5a" text-anchor="start" textLength="188" lengthAdjust="spacingAndGlyphs" >Rotate View</text>
<text x="3120" y="1269" font-size="29" font-weight="bold" font-family='"DejaVu Sans","Liberation Sans",sans-serif' fill="#4d6d89" text-anchor="start" textLength="36" lengthAdjust="spacingAndGlyphs" >0°</text>
<text x="3351" y="1269" font-size="29" font-weight="bold" font-family='"DejaVu Sans","Liberation Sans",sans-serif' fill="#4d6d89" text-anchor="start" textLength="56" lengthAdjust="spacingAndGlyphs" >90°</text>
<text x="3121" y="1341" font-size="29" font-weight="bold" font-family='"DejaVu Sans","Liberation Sans",sans-serif' fill="#4d6d89" text-anchor="start" textLength="74" lengthAdjust="spacingAndGlyphs" >180°</text>
<text x="3351" y="1341" font-size="29" font-weight="bold" font-family='"DejaVu Sans","Liberation Sans",sans-serif' fill="#4d6d89" text-anchor="start" textLength="75" lengthAdjust="spacingAndGlyphs" >270°</text>
<g transform="translate(3062 1255) rotate(0)"><rect x="-25" y="-18" width="50" height="36" fill="#ccc" stroke="#6e6e6e" stroke-width="2.6"/><path d="M-20 -5 V-13 H-12 M12 -13 H20 V-5 M20 5 V13 H12 M-12 13 H-20 V5" fill="none" stroke="#222" stroke-width="2.6"/><text x="0" y="10" font-size="27" font-weight="bold" font-family='"Liberation Sans",sans-serif' fill="#e8202a" text-anchor="middle" >ab</text></g>
<g transform="translate(3293 1255) rotate(90)"><rect x="-25" y="-18" width="50" height="36" fill="#fff" stroke="#6e6e6e" stroke-width="2.6"/><path d="M-20 -5 V-13 H-12 M12 -13 H20 V-5 M20 5 V13 H12 M-12 13 H-20 V5" fill="none" stroke="#222" stroke-width="2.6"/><text x="0" y="10" font-size="27" font-weight="bold" font-family='"Liberation Sans",sans-serif' fill="#e8202a" text-anchor="middle" >ab</text></g>
<g transform="translate(3062 1327) rotate(180)"><rect x="-25" y="-18" width="50" height="36" fill="#fff" stroke="#6e6e6e" stroke-width="2.6"/><path d="M-20 -5 V-13 H-12 M12 -13 H20 V-5 M20 5 V13 H12 M-12 13 H-20 V5" fill="none" stroke="#222" stroke-width="2.6"/><text x="0" y="10" font-size="27" font-weight="bold" font-family='"Liberation Sans",sans-serif' fill="#e8202a" text-anchor="middle" >ab</text></g>
<g transform="translate(3293 1327) rotate(270)"><rect x="-25" y="-18" width="50" height="36" fill="#fff" stroke="#6e6e6e" stroke-width="2.6"/><path d="M-20 -5 V-13 H-12 M12 -13 H20 V-5 M20 5 V13 H12 M-12 13 H-20 V5" fill="none" stroke="#222" stroke-width="2.6"/><text x="0" y="10" font-size="27" font-weight="bold" font-family='"Liberation Sans",sans-serif' fill="#e8202a" text-anchor="middle" >ab</text></g>
<text x="3031" y="1421" font-size="29" font-weight="bold" font-family='"DejaVu Sans","Liberation Sans",sans-serif' fill="#5a5a5a" text-anchor="start" textLength="299" lengthAdjust="spacingAndGlyphs" >Reveal Cutting Mat</text>
<path d="M3062 1461 H3207" stroke="#b5b3a5" stroke-width="3"/><path d="M3062 1465 H3207" stroke="#fff" stroke-width="3"/>
<path d="M3048 1443 Q3048 1440 3051 1440 H3072 Q3075 1440 3075 1443 V1476 L3061.5 1491 L3048 1476 Z" fill="#e9e9e4" stroke="#7a8a7a" stroke-width="2.4"/><path d="M3050 1443 H3073" stroke="#39c04a" stroke-width="5"/><path d="M3050 1478 L3061.5 1490 L3073 1478" stroke="#39b04a" stroke-width="4" fill="none"/>
<text x="3255" y="1472" font-size="31" font-weight="normal" font-family='"DejaVu Sans","Liberation Sans",sans-serif' fill="#000" text-anchor="start" textLength="46" lengthAdjust="spacingAndGlyphs" >0%</text>
<text x="3435" y="1468" font-size="29" font-weight="normal" font-family='"DejaVu Sans","Liberation Sans",sans-serif' fill="#111" text-anchor="start" textLength="29" lengthAdjust="spacingAndGlyphs" >%</text>
<text x="3031" y="1548" font-size="29" font-weight="bold" font-family='"DejaVu Sans","Liberation Sans",sans-serif' fill="#5a5a5a" text-anchor="start" textLength="181" lengthAdjust="spacingAndGlyphs" >Cutting Mat</text>
<text x="3045" y="1613" font-size="29" font-weight="bold" font-family='"DejaVu Sans","Liberation Sans",sans-serif' fill="#4d6d89" text-anchor="start" textLength="95" lengthAdjust="spacingAndGlyphs" >12x24</text>
<text x="3045" y="1685" font-size="29" font-weight="bold" font-family='"DejaVu Sans","Liberation Sans",sans-serif' fill="#4d6d89" text-anchor="start" textLength="95" lengthAdjust="spacingAndGlyphs" >12x12</text>
<text x="3045" y="1757" font-size="29" font-weight="bold" font-family='"DejaVu Sans","Liberation Sans",sans-serif' fill="#4d6d89" text-anchor="start" textLength="95" lengthAdjust="spacingAndGlyphs" >Letter</text>
<text x="3045" y="1829" font-size="29" font-weight="bold" font-family='"DejaVu Sans","Liberation Sans",sans-serif' fill="#4d6d89" text-anchor="start" textLength="100" lengthAdjust="spacingAndGlyphs" >Stamp</text>
<text x="3006" y="2637" font-size="34" font-weight="normal" font-family='"Liberation Sans",sans-serif' fill="#5b7b96" text-anchor="start" textLength="278" lengthAdjust="spacingAndGlyphs" >Advanced Options</text>
<path d="M3006 2643 H3284" stroke="#5b7b96" stroke-width="2.5"/>
<g transform="translate(38.50 202.75) scale(2.8125)" fill="none" stroke="#1a1a1a" stroke-width="1.15" stroke-linejoin="round" stroke-linecap="round"><path d="M6 3.5 H13.5 L18 8 V20.5 H6 Z" fill="#fff"/><path d="M13.5 3.5 V8 H18" fill="#eee"/></g>
<g transform="translate(106.00 202.75) scale(2.8125)" fill="none" stroke="#1a1a1a" stroke-width="1.15" stroke-linejoin="round" stroke-linecap="round"><path d="M3.5 19 V9 Q3.5 7.5 5 7.5 H8 L9.5 9 H14 V11.5" fill="#e8e8e8"/><path d="M3.5 19.5 L7.5 12 H20.5 L16.5 19.5 Z" fill="#fff"/><path d="M12 6 Q15.5 2.5 19 6.5" stroke-width="1"/><path d="M20.3 8.8 L16.5 7.8 L19.8 4.6 Z" fill="#111" stroke="none"/></g>
<g transform="translate(173.50 202.75) scale(2.8125)" fill="none" stroke="#1a1a1a" stroke-width="1.15" stroke-linejoin="round" stroke-linecap="round"><rect x="3.5" y="3.5" width="17" height="17" rx="1.5" fill="#d9d9d9" stroke="#444" stroke-width="1.3"/><rect x="6.5" y="3.5" width="11" height="8" fill="#fff" stroke="#222"/><path d="M8.5 6 H15.5 M8.5 8.5 H15.5" stroke="#e23b3b" stroke-width="1.5" stroke-linecap="butt"/><rect x="7.5" y="15" width="8" height="5.5" fill="#fff" stroke="#222"/><rect x="9.5" y="16.5" width="1.6" height="4" fill="#111" stroke="none"/></g>
<g transform="translate(241.00 202.75) scale(2.8125)" fill="none" stroke="#1a1a1a" stroke-width="1.15" stroke-linejoin="round" stroke-linecap="round"><path d="M5.5 3.5 H15 L19 7.5 V20.5 H5.5 Z" fill="url(#sdg)" stroke="#0c3a9a" stroke-width="1"/><rect x="6.5" y="6" width="11" height="2.6" fill="#c8141e" stroke="none"/><text x="11.5" y="18.6" font-size="6.3" font-weight="bold" font-family='"Liberation Sans",sans-serif' fill="#fff" stroke="none" text-anchor="middle">SD</text></g>
<g transform="translate(321.50 202.75) scale(2.8125)" fill="none" stroke="#1a1a1a" stroke-width="1.15" stroke-linejoin="round" stroke-linecap="round"><path d="M8.5 9.5 L11 3.5 H20 L17 9.5 Z" fill="#eee"/><path d="M10.5 7.5 H17.3 M11.3 5.5 H18.3" stroke="#aaa" stroke-width=".8"/><path d="M3.5 14 Q3.5 10 8 9.5 H17.5 Q21 9.5 20.5 13 L19 17.5 Q18.5 20 16 20 H5.5 Q3.5 20 3.5 17 Z" fill="#fff" stroke-width="1.3"/><path d="M4 13.5 H19.5 M4 17 H18.5" stroke-width="1.3"/><rect x="13.5" y="14.6" width="2.4" height="1" fill="#e22" stroke="none"/><rect x="13.5" y="15.6" width="2.4" height="1" fill="#2c2" stroke="none"/></g>
<g transform="translate(389.00 202.75) scale(2.8125)" fill="none" stroke="#1a1a1a" stroke-width="1.15" stroke-linejoin="round" stroke-linecap="round"><rect x="3" y="4.5" width="18" height="6.5" rx="2.5" fill="#ddd" stroke-width="1.4"/><path d="M4 6.2 H17.5" stroke-width="1.6"/><path d="M4.5 9 H17" stroke="#888" stroke-width="1"/><rect x="17.5" y="5.2" width="3" height="5" fill="#111" stroke="none"/><rect x="18.4" y="7.2" width="1.3" height="1.3" fill="#2e2" stroke="none"/><rect x="7" y="11" width="10" height="9.5" fill="#fff" stroke-width="1.3"/><path d="M14.5 13 L9.5 15.7 L14.5 18.5 M11.8 14.5 V17" stroke="#f02030" stroke-width="1.3"/></g>
<g transform="translate(471.50 202.75) scale(2.8125)" fill="none" stroke="#1a1a1a" stroke-width="1.15" stroke-linejoin="round" stroke-linecap="round"><path d="M4 3.5 H9.5 L12 6 V14 H4 Z" fill="#f3f3f3" stroke="#c4c4c4"/><path d="M5.5 7.5 H8 M5.5 9.5 H10.5 M5.5 11.5 H10.5" stroke="#c4c4c4" stroke-width=".9"/><path d="M10 9.5 H16.5 L19.5 12.5 V20.5 H10 Z" fill="#fbfcff" stroke="#a9bfe6" stroke-width="1.3"/><path d="M12 13.5 H14.5 M12 15.8 H17.5 M12 18 H17.5" stroke="#b5c7e8" stroke-width="1"/></g>
<g transform="translate(539.00 202.75) scale(2.8125)" fill="none" stroke="#1a1a1a" stroke-width="1.15" stroke-linejoin="round" stroke-linecap="round"><rect x="4" y="6" width="14.5" height="13" rx="1.8" fill="#eee" stroke-width="1.4"/><path d="M8 6 Q8 3.5 11.3 3.5 Q14.5 3.5 14.5 6 Z" fill="#ccc" stroke-width="1.3"/><circle cx="11.3" cy="5.5" r=".6" fill="#333" stroke="none"/><path d="M11 12 H17.5 L20.5 14.5 V20.5 H11 Z" fill="#fff" stroke="#1545a8" stroke-width="1.4"/><path d="M12.5 15 H15" stroke="#1545a8" stroke-width="1.1"/><rect x="12.5" y="17" width="6.5" height="3" fill="#6e8fcc" stroke="none"/></g>
<g transform="translate(606.50 202.75) scale(2.8125)" fill="none" stroke="#1a1a1a" stroke-width="1.15" stroke-linejoin="round" stroke-linecap="round"><path d="M9.5 3.5 L12.6 14.5 M15 3.5 L11.9 14.5" stroke="#9aa0a8" stroke-width="1.1"/><ellipse cx="9" cy="17.5" rx="2.6" ry="3" stroke="#a9bfe6" stroke-width="1.2"/><ellipse cx="15.5" cy="17.5" rx="2.6" ry="3" stroke="#a9bfe6" stroke-width="1.2"/><path d="M12.6 14.5 L10.5 15.3 M11.9 14.5 L14 15.3" stroke="#a9bfe6" stroke-width="1.1"/></g>
<g transform="translate(688.50 202.75) scale(2.8125)" fill="none" stroke="#1a1a1a" stroke-width="1.15" stroke-linejoin="round" stroke-linecap="round"><path d="M16 18 Q20.5 14 17.5 9.5 Q14.5 6 9 10.5" stroke-width="1.5"/><path d="M5 14.5 L6 7.5 L12 12.5 Z" fill="#111" stroke="#111" stroke-width=".6"/></g>
<g transform="translate(756.00 202.75) scale(2.8125)" fill="none" stroke="#1a1a1a" stroke-width="1.15" stroke-linejoin="round" stroke-linecap="round"><path d="M8 18 Q3.5 14 6.5 9.5 Q9.5 6 15 10.5" stroke="#b9b9b9" stroke-width="1.3"/><path d="M19 14.5 L18 7.5 L12 12.5 Z" fill="#b9b9b9" stroke="#b9b9b9" stroke-width=".6"/></g>
<g transform="translate(844.50 202.75) scale(2.8125)" fill="none" stroke="#1a1a1a" stroke-width="1.15" stroke-linejoin="round" stroke-linecap="round"><circle cx="9.5" cy="9.5" r="6" fill="#fff" stroke-width="1.3"/><path d="M9.5 6.3 V12.7 M6.3 9.5 H12.7" stroke-width="2.2" stroke-linecap="butt"/><path d="M14 14 L20.5 20.5" stroke-width="2.4"/></g>
<g transform="translate(912.00 202.75) scale(2.8125)" fill="none" stroke="#1a1a1a" stroke-width="1.15" stroke-linejoin="round" stroke-linecap="round"><circle cx="9.5" cy="9.5" r="6" fill="#fff" stroke-width="1.3"/><path d="M6.3 9.5 H12.7" stroke-width="2.2" stroke-linecap="butt"/><path d="M14 14 L20.5 20.5" stroke-width="2.4"/></g>
<g transform="translate(979.50 202.75) scale(2.8125)" fill="none" stroke="#1a1a1a" stroke-width="1.15" stroke-linejoin="round" stroke-linecap="round"><path d="M6.5 3 V5 M6.5 8 V10 M3 6.5 H5 M8 6.5 H10" stroke-width="1"/><path d="M8.5 8.5 L11 11" stroke-width="1" stroke-dasharray="1 1"/><circle cx="13.5" cy="13.5" r="4" fill="#fff" stroke-width="1.2"/><circle cx="13.5" cy="13.5" r="1.5" fill="#111" stroke="none"/><path d="M16.5 16.5 L20.5 20.5" stroke-width="1.8"/></g>
<g transform="translate(1047.00 202.75) scale(2.8125)" fill="none" stroke="#1a1a1a" stroke-width="1.15" stroke-linejoin="round" stroke-linecap="round"><path d="M12 20.5 L3.5 12.5 H8 Q8.5 10.5 7 9.5 L12 5 L17 9.5 Q15.5 10.5 16 12.5 H20.5 Z" fill="#fff" stroke-width="1.2"/><path d="M9 8.5 H15" stroke-width="1"/><path d="M8.5 9.5 L9.5 7.5 L10.5 9.5 M13.5 9.5 L14.5 7.5 L15.5 9.5" stroke-width=".7"/></g>
<g transform="translate(1114.50 202.75) scale(2.8125)" fill="none" stroke="#1a1a1a" stroke-width="1.15" stroke-linejoin="round" stroke-linecap="round"><rect x="3.5" y="3.5" width="17" height="17" fill="#8b8b8b" stroke="#333" stroke-width="1.3"/><rect x="8" y="6" width="9" height="12" fill="#fff" stroke="#333" stroke-width="1.2"/></g>
<g transform="translate(1985.50 202.75) scale(2.8125)" fill="none" stroke="#1a1a1a" stroke-width="1.15" stroke-linejoin="round" stroke-linecap="round"><path d="M8 8.5 L14.5 4 L19 10.5 L12.5 15 Z" fill="#e3e3e3" stroke-width="1.1"/><ellipse cx="10.3" cy="11.7" rx="4" ry="2.4" transform="rotate(-35 10.3 11.7)" fill="#cfcfcf" stroke-width="1"/><path d="M12 15 Q10 17.5 6 18.5 Q4 19 3 19.7 H14.5 Q13 18 13.5 15.5 Z" fill="#2e5cf0" stroke="none"/></g>
<g transform="translate(2053.00 202.75) scale(2.8125)" fill="none" stroke="#1a1a1a" stroke-width="1.15" stroke-linejoin="round" stroke-linecap="round"><rect x="4.5" y="5" width="15" height="14" fill="url(#bluesq)" stroke="#222" stroke-width="1.1"/></g>
<g transform="translate(2120.50 202.75) scale(2.8125)" fill="none" stroke="#1a1a1a" stroke-width="1.15" stroke-linejoin="round" stroke-linecap="round"><rect x="4.5" y="5" width="15" height="14" fill="#e6f4fc" stroke="#222" stroke-width="1.1"/><circle cx="7" cy="7.5" r="1.05" fill="#2aa7ea" stroke="none"/><circle cx="12" cy="7.5" r="1.05" fill="#2aa7ea" stroke="none"/><circle cx="17" cy="7.5" r="1.05" fill="#2aa7ea" stroke="none"/><circle cx="9.5" cy="11" r="1.05" fill="#2aa7ea" stroke="none"/><circle cx="14.5" cy="11" r="1.05" fill="#2aa7ea" stroke="none"/><circle cx="7" cy="14.5" r="1.05" fill="#2aa7ea" stroke="none"/><circle cx="12" cy="14.5" r="1.05" fill="#2aa7ea" stroke="none"/><circle cx="17" cy="14.5" r="1.05" fill="#2aa7ea" stroke="none"/><circle cx="9.5" cy="17.5" r="1.05" fill="#2aa7ea" stroke="none"/><circle cx="14.5" cy="17.5" r="1.05" fill="#2aa7ea" stroke="none"/></g>
<g transform="translate(2188.00 202.75) scale(2.8125)" fill="none" stroke="#1a1a1a" stroke-width="1.15" stroke-linejoin="round" stroke-linecap="round"><path d="M6 8 L15 18 M7 6.5 L17 17.5 M8.5 6 L18 16.5 M10.5 6 L18.5 15 M12.5 6 L18.5 13 M6 10.5 L13 18.5 M6 13 L11 18.5 M14.5 6.5 L18.5 11 M6.5 15.5 L9 18.5 M16 7 L7 15" stroke="#222" stroke-width=".9"/></g>
<g transform="translate(2255.50 202.75) scale(2.8125)" fill="none" stroke="#1a1a1a" stroke-width="1.15" stroke-linejoin="round" stroke-linecap="round"><rect x="5" y="5" width="14" height="14" stroke="#f02020" stroke-width=".9"/><rect x="8" y="8" width="8" height="8" stroke="#f02020" stroke-width=".9"/><circle cx="6.5" cy="6.5" r="1.55" stroke="#f02020" stroke-width=".9"/><circle cx="10.2" cy="6.5" r="1.55" stroke="#f02020" stroke-width=".9"/><circle cx="13.8" cy="6.5" r="1.55" stroke="#f02020" stroke-width=".9"/><circle cx="17.5" cy="6.5" r="1.55" stroke="#f02020" stroke-width=".9"/><circle cx="6.5" cy="10.2" r="1.55" stroke="#f02020" stroke-width=".9"/><circle cx="17.5" cy="10.2" r="1.55" stroke="#f02020" stroke-width=".9"/><circle cx="6.5" cy="13.8" r="1.55" stroke="#f02020" stroke-width=".9"/><circle cx="17.5" cy="13.8" r="1.55" stroke="#f02020" stroke-width=".9"/><circle cx="6.5" cy="17.5" r="1.55" stroke="#f02020" stroke-width=".9"/><circle cx="10.2" cy="17.5" r="1.55" stroke="#f02020" stroke-width=".9"/><circle cx="13.8" cy="17.5" r="1.55" stroke="#f02020" stroke-width=".9"/><circle cx="17.5" cy="17.5" r="1.55" stroke="#f02020" stroke-width=".9"/></g>
<g transform="translate(2335.50 202.75) scale(2.8125)" fill="none" stroke="#1a1a1a" stroke-width="1.15" stroke-linejoin="round" stroke-linecap="round"><path d="M6.5 7 H17.5" stroke="#f4b080" stroke-width="1.1"/><path d="M6.5 10.5 H17.5" stroke="#f06060" stroke-width="1.5"/><path d="M6.5 14 H17.5" stroke="#1030e0" stroke-width="1.8"/><path d="M6.5 17.8 H17.5" stroke="#10a020" stroke-width="2.2"/></g>
<g transform="translate(2403.00 202.75) scale(2.8125)" fill="none" stroke="#1a1a1a" stroke-width="1.15" stroke-linejoin="round" stroke-linecap="round"><path d="M6.5 6.5 H17.5" stroke-width="1" stroke-dasharray=".8 .8" stroke-linecap="butt"/><path d="M6.5 10 H17.5" stroke-width="1.5" stroke-dasharray="2.5 1" stroke-linecap="butt"/><path d="M6.5 13.7 H17.5" stroke-width="1.6"/><path d="M6.5 17.8 H17.5" stroke-width="2.1"/></g>
<g transform="translate(2470.50 202.75) scale(2.8125)" fill="none" stroke="#1a1a1a" stroke-width="1.15" stroke-linejoin="round" stroke-linecap="round"><path d="M3 12 H21" stroke="#f02020" stroke-width="1.1" stroke-dasharray="2.2 1.2" stroke-linecap="butt"/><path d="M9 10 L18.5 13 M9 14 L18.5 11" stroke="#222" stroke-width="1.2"/><ellipse cx="7" cy="9.3" rx="2.2" ry="1.7" stroke="#222" fill="#fff" stroke-width="1"/><ellipse cx="7" cy="14.7" rx="2.2" ry="1.7" stroke="#222" fill="#fff" stroke-width="1"/></g>
<g transform="translate(2551.50 202.75) scale(2.8125)" fill="none" stroke="#1a1a1a" stroke-width="1.15" stroke-linejoin="round" stroke-linecap="round"><text x="12" y="18.3" font-size="18" font-weight="bold" font-family='"Liberation Serif",serif' fill="#111" stroke="none" text-anchor="middle">A</text></g>
<g transform="translate(2635.50 202.75) scale(2.8125)" fill="none" stroke="#1a1a1a" stroke-width="1.15" stroke-linejoin="round" stroke-linecap="round"><g transform="rotate(0 12 12)"><path d="M12 2.5 L15.2 6.8 H13.2 V10 H10.8 V6.8 H8.8 Z" fill="#fff" stroke-width=".9"/></g><g transform="rotate(90 12 12)"><path d="M12 2.5 L15.2 6.8 H13.2 V10 H10.8 V6.8 H8.8 Z" fill="#fff" stroke-width=".9"/></g><g transform="rotate(180 12 12)"><path d="M12 2.5 L15.2 6.8 H13.2 V10 H10.8 V6.8 H8.8 Z" fill="#fff" stroke-width=".9"/></g><g transform="rotate(270 12 12)"><path d="M12 2.5 L15.2 6.8 H13.2 V10 H10.8 V6.8 H8.8 Z" fill="#fff" stroke-width=".9"/></g></g>
<g transform="translate(2703.00 202.75) scale(2.8125)" fill="none" stroke="#1a1a1a" stroke-width="1.15" stroke-linejoin="round" stroke-linecap="round"><path d="M8 9.5 Q10 5 14.5 5.5 Q19.5 6.5 19.5 12 Q19 18 13 18.5 L13 16 Q17 15.5 17 12 Q17 8 13.5 8 Q11.5 8 10.3 10.5 L12.5 12 L4.5 13 L6 5.5 Z" fill="#fff" stroke-width="1"/></g>
<g transform="translate(2770.50 202.75) scale(2.8125)" fill="none" stroke="#1a1a1a" stroke-width="1.15" stroke-linejoin="round" stroke-linecap="round"><rect x="4" y="6" width="14" height="14.5" stroke="#2050d0" stroke-width="1" stroke-dasharray="1.3 1"/><rect x="5" y="12" width="7.5" height="7.5" fill="#fff" stroke-width="1"/><rect x="9" y="7.5" width="7.5" height="7.5" fill="#fff" stroke-width="1"/><path d="M14 9.5 L18.5 4.5 M15.5 4.3 H18.7 V7.5 M8 16.5 L5 19.5" stroke-width="1"/></g>
<g transform="translate(2838.00 202.75) scale(2.8125)" fill="none" stroke="#1a1a1a" stroke-width="1.15" stroke-linejoin="round" stroke-linecap="round"><path d="M5.5 19 L12.5 5 H19 L12 19 Z" fill="#fff" stroke-width="1.2"/></g>
<g transform="translate(2905.50 202.75) scale(2.8125)" fill="none" stroke="#1a1a1a" stroke-width="1.15" stroke-linejoin="round" stroke-linecap="round"><rect x="4" y="8.5" width="3" height="8" rx=".6" fill="#fff" stroke-width="1"/><rect x="9.2" y="10" width="3.2" height="5" rx=".6" fill="#fff" stroke-width="1"/><rect x="15.5" y="5" width="3.3" height="15" rx="1" fill="#fff" stroke-width="1"/><path d="M7 12.5 H9.2 M12.4 12.5 H15.5" stroke-width="1"/></g>
<g transform="translate(2973.00 202.75) scale(2.8125)" fill="none" stroke="#1a1a1a" stroke-width="1.15" stroke-linejoin="round" stroke-linecap="round"><g transform="rotate(0 12 12)"><ellipse cx="12" cy="5.8" rx="1.6" ry="2.6" fill="#fff" stroke-width=".85"/></g><g transform="rotate(36 12 12)"><ellipse cx="12" cy="5.8" rx="1.6" ry="2.6" fill="#fff" stroke-width=".85"/></g><g transform="rotate(72 12 12)"><ellipse cx="12" cy="5.8" rx="1.6" ry="2.6" fill="#fff" stroke-width=".85"/></g><g transform="rotate(108 12 12)"><ellipse cx="12" cy="5.8" rx="1.6" ry="2.6" fill="#fff" stroke-width=".85"/></g><g transform="rotate(144 12 12)"><ellipse cx="12" cy="5.8" rx="1.6" ry="2.6" fill="#fff" stroke-width=".85"/></g><g transform="rotate(180 12 12)"><ellipse cx="12" cy="5.8" rx="1.6" ry="2.6" fill="#fff" stroke-width=".85"/></g><g transform="rotate(216 12 12)"><ellipse cx="12" cy="5.8" rx="1.6" ry="2.6" fill="#fff" stroke-width=".85"/></g><g transform="rotate(252 12 12)"><ellipse cx="12" cy="5.8" rx="1.6" ry="2.6" fill="#fff" stroke-width=".85"/></g><g transform="rotate(288 12 12)"><ellipse cx="12" cy="5.8" rx="1.6" ry="2.6" fill="#fff" stroke-width=".85"/></g><g transform="rotate(324 12 12)"><ellipse cx="12" cy="5.8" rx="1.6" ry="2.6" fill="#fff" stroke-width=".85"/></g><path d="M7 19 L17.5 5 M8.5 20 L19 6" stroke-width="1"/><path d="M7 19 L8.5 20 M17.5 5 L19 6" stroke-width="1"/></g>
<g transform="translate(3053.50 202.75) scale(2.8125)" fill="none" stroke="#1a1a1a" stroke-width="1.15" stroke-linejoin="round" stroke-linecap="round"><path d="M3.5 12 H7.5 L9 10 H17 V20 H3.5 Z" fill="#9a9a9a" stroke="#333" stroke-width="1.1"/><circle cx="15.5" cy="8" r="4.7" fill="#fff" stroke="#333" stroke-width="1"/><text x="15.5" y="10.8" font-size="7.5" font-family='"Liberation Sans",sans-serif' fill="#2a7ff0" stroke="none" text-anchor="middle">M</text></g>
<g transform="translate(3121.00 202.75) scale(2.8125)" fill="none" stroke="#1a1a1a" stroke-width="1.15" stroke-linejoin="round" stroke-linecap="round"><rect x="4" y="4" width="16" height="16" rx="2" fill="#fff" stroke="#333" stroke-width="1"/><rect x="5.5" y="5.5" width="13" height="13" fill="none" stroke="#333" stroke-width=".9"/><path d="M15.5 12 H19 M17.3 10.7 L18.7 12 L17.3 13.3" stroke-width="1"/></g>
<g transform="translate(3188.50 202.75) scale(2.8125)" fill="none" stroke="#1a1a1a" stroke-width="1.15" stroke-linejoin="round" stroke-linecap="round"><rect x="4" y="4" width="16" height="16" rx="3" fill="#dfe9fb" stroke="#7fa0dc" stroke-width="1"/><path d="M7.5 8 Q9 6.5 10.5 7.5 Q12 8.5 13.5 7.5 Q15 6.5 16.5 8 Q17.5 9.5 16.5 11 Q15.8 12 16.5 13 Q17.5 14.5 16.5 16 Q15 17.5 13.5 16.5 Q12 15.5 10.5 16.5 Q9 17.5 7.5 16 Q6.5 14.5 7.5 13 Q8.2 12 7.5 11 Q6.5 9.5 7.5 8 Z" fill="#2378e8" stroke="#f2e020" stroke-width="1.6"/></g>
<g transform="translate(3270.50 202.75) scale(2.8125)" fill="none" stroke="#1a1a1a" stroke-width="1.15" stroke-linejoin="round" stroke-linecap="round"><rect x="4" y="5" width="16" height="14.5" fill="#fff" stroke="#333" stroke-width="1.1"/><rect x="6" y="7" width="12" height="10.5" fill="#fff" stroke="#f04048" stroke-width="1"/></g>
<g transform="translate(3338.00 202.75) scale(2.8125)" fill="none" stroke="#1a1a1a" stroke-width="1.15" stroke-linejoin="round" stroke-linecap="round"><path d="M7.5 15 L15 5.5 L19 8.5 L11.5 18 Z" fill="#6a6a6a" stroke="#222" stroke-width="1"/><path d="M7.5 15 L11.5 18 L9.5 19.5 L5 20.5 L6 16.5 Z" fill="#f0e020" stroke="#222" stroke-width=".9"/></g>
<g transform="translate(3405.50 202.75) scale(2.8125)" fill="none" stroke="#1a1a1a" stroke-width="1.15" stroke-linejoin="round" stroke-linecap="round"><path d="M4.5 9 V5 H8.5 M15.5 5 H19.5 V9 M19.5 15 V19 H15.5 M8.5 19 H4.5 V15" stroke-width="1.6" stroke-linecap="butt" stroke-linejoin="miter"/></g>
<g transform="translate(3473.00 202.75) scale(2.8125)" fill="none" stroke="#1a1a1a" stroke-width="1.15" stroke-linejoin="round" stroke-linecap="round"><rect x="5" y="5" width="14" height="14" fill="#e6edff" stroke="none"/><path d="M5.0 5 V19 M5 5.0 H19 M7.8 5 V19 M5 7.8 H19 M10.6 5 V19 M5 10.6 H19 M13.4 5 V19 M5 13.4 H19 M16.2 5 V19 M5 16.2 H19 M19.0 5 V19 M5 19.0 H19" stroke="#2a56f0" stroke-width=".95" stroke-linecap="butt"/></g>
<g transform="translate(38.25 293.00) scale(2.8125)" fill="none" stroke="#1a1a1a" stroke-width="1.15" stroke-linejoin="round" stroke-linecap="round"><path d="M5 4.5 L17.5 9 L14 11.5 L20.5 18 L18 20.5 L11.5 14 L9 17.5 Z" fill="#dcdcdc" stroke-width="1.2"/></g>
<g transform="translate(38.25 360.50) scale(2.8125)" fill="none" stroke="#1a1a1a" stroke-width="1.15" stroke-linejoin="round" stroke-linecap="round"><path d="M9.5 6 H16.5 M9.5 6 Q6 8 5.5 11.5 L8 17.5" stroke-width="1.1"/><rect x="8.3" y="4.8" width="2.6" height="2.6" fill="#2060ff" stroke="none"/><rect x="15.5" y="4.8" width="2.6" height="2.6" fill="#2060ff" stroke="none"/><rect x="4" y="10" width="2.6" height="2.6" fill="#2060ff" stroke="none"/><rect x="6.5" y="16.3" width="2.6" height="2.6" fill="#2060ff" stroke="none"/><path d="M10.5 9.5 L18 12.5 L15.7 14 L20 18.5 L18.5 20 L14.2 15.5 L12.8 18 Z" fill="#fff" stroke-width="1"/></g>
<g transform="translate(38.25 442.00) scale(2.8125)" fill="none" stroke="#1a1a1a" stroke-width="1.15" stroke-linejoin="round" stroke-linecap="round"><path d="M6.5 18 L18 5.5" stroke-width="1.3"/></g>
<g transform="translate(38.25 509.50) scale(2.8125)" fill="none" stroke="#1a1a1a" stroke-width="1.15" stroke-linejoin="round" stroke-linecap="round"><rect x="5.5" y="7.5" width="13.5" height="10" stroke-width="1.3" stroke-linejoin="miter"/></g>
<g transform="translate(38.25 577.00) scale(2.8125)" fill="none" stroke="#1a1a1a" stroke-width="1.15" stroke-linejoin="round" stroke-linecap="round"><rect x="5.5" y="7" width="13.5" height="10" rx="2.2" stroke-width="1.1" stroke="#333"/></g>
<g transform="translate(38.25 644.50) scale(2.8125)" fill="none" stroke="#1a1a1a" stroke-width="1.15" stroke-linejoin="round" stroke-linecap="round"><ellipse cx="12.2" cy="12" rx="7.3" ry="5" stroke-width="1.2"/></g>
<g transform="translate(38.25 726.00) scale(2.8125)" fill="none" stroke="#1a1a1a" stroke-width="1.15" stroke-linejoin="round" stroke-linecap="round"><path d="M13.5 4.5 L18.5 8 L5.5 14.5 L15 18.5 Z" stroke-width="1.2"/></g>
<g transform="translate(38.25 793.50) scale(2.8125)" fill="none" stroke="#1a1a1a" stroke-width="1.15" stroke-linejoin="round" stroke-linecap="round"><path d="M11.5 12.5 C5 9 4 16 8 17 C12 18 13 13 11.5 12.5 C9 11 10 6 14 5.5 C18 5 19 9 16.5 11.5 C15 13 13 13.2 11.5 12.5" stroke-width="1.2"/></g>
<g transform="translate(38.25 861.00) scale(2.8125)" fill="none" stroke="#1a1a1a" stroke-width="1.15" stroke-linejoin="round" stroke-linecap="round"><path d="M7.2 11.5 L12.5 2.5" stroke="#ff8a1e" stroke-width="2.2"/><path d="M6.8 12.3 L7.3 11.4" stroke="#333" stroke-width="1.2"/><path d="M6 14 C6.5 18 10 18 12.5 15.5 C14.5 13.5 16.5 13.5 18.5 13.5" stroke-width="1.1"/></g>
<g transform="translate(38.25 945.00) scale(2.8125)" fill="none" stroke="#1a1a1a" stroke-width="1.15" stroke-linejoin="round" stroke-linecap="round"><text x="9.3" y="18" font-size="15.5" font-weight="bold" font-family='"Liberation Serif",serif' fill="#111" stroke="none" text-anchor="middle">A</text><path d="M17.3 5 V19.5 M16 5 H18.6 M16 19.5 H18.6" stroke="#f01020" stroke-width="1.1" stroke-linecap="butt"/></g>
<g transform="translate(38.25 1029.00) scale(2.8125)" fill="none" stroke="#1a1a1a" stroke-width="1.15" stroke-linejoin="round" stroke-linecap="round"><path d="M5 13 L8 8.5 L17 5 L20 7 L19.5 11.5 L10 17.5 L5 16 Z" fill="#fff" stroke="#333" stroke-width=".8"/><path d="M8 8.5 L11.5 11 L20 7 M11.5 11 L10 17.5 M5 13 L10 14.5" stroke="#333" stroke-width=".8"/></g>
<g transform="translate(38.25 1096.50) scale(2.8125)" fill="none" stroke="#1a1a1a" stroke-width="1.15" stroke-linejoin="round" stroke-linecap="round"><path d="M15.5 3.8 Q17.8 3.8 18 6 L14.5 12 L12 10.5 Z" fill="#fff" stroke="#222" stroke-width=".85"/><path d="M12 10.5 L14.5 12 L6.5 20.5 L6 17.8 Z" fill="#fff" stroke="#222" stroke-width=".85"/><path d="M6.5 20.5 L13 11.2" stroke="#222" stroke-width="1"/></g>
<g transform="translate(38.25 1178.00) scale(2.8125)" fill="none" stroke="#1a1a1a" stroke-width="1.15" stroke-linejoin="round" stroke-linecap="round"><path d="M5.5 19 L11 9.5 L16.5 19 Z" fill="#c9d6f6" stroke="#f4a6b4" stroke-width="1"/><circle cx="17" cy="7" r="3" fill="#eee" stroke="#aaa" stroke-width=".9"/><path d="M15 9 L10 15.5" stroke="#999" stroke-width="1.6"/><path d="M10 15.5 L8.5 17.5" stroke="#777" stroke-width="1"/></g>
<g transform="translate(38.25 1312.00) scale(2.8125)" fill="none" stroke="#1a1a1a" stroke-width="1.15" stroke-linejoin="round" stroke-linecap="round"><rect x="4.5" y="6" width="15.5" height="12" fill="#8a8a8a" stroke="#222" stroke-width="1.2"/><rect x="7" y="8.3" width="10.5" height="7.5" fill="#d6d6d6" stroke="#666" stroke-width=".6"/></g>
<g transform="translate(38.25 1379.50) scale(2.8125)" fill="none" stroke="#1a1a1a" stroke-width="1.15" stroke-linejoin="round" stroke-linecap="round"><path d="M12 8.2 Q8 5.8 4.5 7 V18 Q8 16.8 12 19.2 Q16 16.8 20 18 V7 Q16 5.8 12 8.2 Z" fill="#fff" stroke="#333" stroke-width="1"/><path d="M12 8.2 V19.2" stroke="#333" stroke-width="1"/><path d="M6 9.5 Q8.5 9 10.5 10 M6 11.7 Q8.5 11.2 10.5 12.2 M6 13.9 Q8.5 13.4 10.5 14.4 M6 16 Q8.5 15.5 10.5 16.5 M18.5 9.5 Q16 9 13.5 10 M18.5 11.7 Q16 11.2 13.5 12.2 M18.5 13.9 Q16 13.4 13.5 14.4 M18.5 16 Q16 15.5 13.5 16.5" stroke="#555" stroke-width=".75"/></g>
<g transform="translate(38.25 1447.00) scale(2.8125)" fill="none" stroke="#1a1a1a" stroke-width="1.15" stroke-linejoin="round" stroke-linecap="round"><circle cx="12" cy="12" r="8.3" fill="#fff" stroke="#9a9a9a" stroke-width=".7"/><circle cx="12" cy="12" r="7.2" fill="#3badd8" stroke="none"/><text x="12" y="18.2" font-size="17.5" font-style="italic" font-family='"Liberation Serif",serif' fill="#fff" stroke="none" text-anchor="middle">S</text></g>
<g transform="translate(38.25 1576.00) scale(2.8125)" fill="none" stroke="#1a1a1a" stroke-width="1.15" stroke-linejoin="round" stroke-linecap="round"><rect x="5" y="6.5" width="14.5" height="11" fill="#fff" stroke="#a9a9a9" stroke-width="1"/><path d="M5 8.7 H19.5" stroke="#a9a9a9" stroke-width="1"/></g>
<g transform="translate(38.25 1643.50) scale(2.8125)" fill="none" stroke="#1a1a1a" stroke-width="1.15" stroke-linejoin="round" stroke-linecap="round"><rect x="5" y="6.5" width="14.5" height="11" fill="#fff" stroke="#a9a9a9" stroke-width="1"/><path d="M5 8.7 H19.5 M12.2 8.7 V17.5" stroke="#a9a9a9" stroke-width="1"/></g>
<g transform="translate(39.50 2701.25) scale(2.8125)" fill="none" stroke="#1a1a1a" stroke-width="1.15" stroke-linejoin="round" stroke-linecap="round"><rect x="6" y="6" width="8.5" height="8.5" stroke="#8a8a8a" stroke-width="1"/><rect x="9.5" y="9.5" width="8.5" height="8.5" stroke="#8a8a8a" stroke-width="1"/><rect x="3.75" y="3.75" width="2.5" height="2.5" rx=".7" fill="#f58a90" stroke="none"/><rect x="17.75" y="3.75" width="2.5" height="2.5" rx=".7" fill="#f58a90" stroke="none"/><rect x="3.75" y="17.75" width="2.5" height="2.5" rx=".7" fill="#f58a90" stroke="none"/><rect x="17.75" y="17.75" width="2.5" height="2.5" rx=".7" fill="#f58a90" stroke="none"/></g>
<g transform="translate(107.00 2701.25) scale(2.8125)" fill="none" stroke="#1a1a1a" stroke-width="1.15" stroke-linejoin="round" stroke-linecap="round"><rect x="5.5" y="5.5" width="8" height="8" stroke="#8a8a8a" stroke-width="1"/><rect x="10.5" y="10.5" width="8" height="8" stroke="#8a8a8a" stroke-width="1"/><rect x="4.25" y="4.25" width="2.5" height="2.5" rx=".7" fill="#f58a90" stroke="none"/><rect x="12.25" y="4.25" width="2.5" height="2.5" rx=".7" fill="#f58a90" stroke="none"/><rect x="4.25" y="12.25" width="2.5" height="2.5" rx=".7" fill="#f58a90" stroke="none"/><rect x="12.25" y="12.25" width="2.5" height="2.5" rx=".7" fill="#f58a90" stroke="none"/><rect x="9.25" y="9.25" width="2.5" height="2.5" rx=".7" fill="#f58a90" stroke="none"/><rect x="17.25" y="9.25" width="2.5" height="2.5" rx=".7" fill="#f58a90" stroke="none"/><rect x="9.25" y="17.25" width="2.5" height="2.5" rx=".7" fill="#f58a90" stroke="none"/><rect x="17.25" y="17.25" width="2.5" height="2.5" rx=".7" fill="#f58a90" stroke="none"/></g>
<g transform="translate(188.50 2701.25) scale(2.8125)" fill="none" stroke="#1a1a1a" stroke-width="1.15" stroke-linejoin="round" stroke-linecap="round"><rect x="4.5" y="4.5" width="12.5" height="12.5" stroke="#1d4fb0" stroke-width="1.2" stroke-dasharray="5 1.2 1.2 1.2"/><rect x="4.5" y="4.5" width="7.5" height="7.5" stroke="#1d4fb0" stroke-width="1.3"/><rect x="9.5" y="9.5" width="9" height="9" fill="#fff" stroke="#1d4fb0" stroke-width="1.3"/><rect x="17.3" y="17.3" width="2.2" height="2.2" rx=".6" stroke="#1d4fb0" stroke-width="1"/></g>
<g transform="translate(256.00 2701.25) scale(2.8125)" fill="none" stroke="#1a1a1a" stroke-width="1.15" stroke-linejoin="round" stroke-linecap="round"><rect x="5" y="5" width="8.5" height="8.5" fill="#fff" stroke="#a9c0ea" stroke-width="1.1"/><rect x="9.5" y="9.5" width="9" height="9" fill="#fff" stroke="#a9c0ea" stroke-width="1.1"/></g>
<g transform="translate(338.50 2701.25) scale(2.8125)" fill="none" stroke="#1a1a1a" stroke-width="1.15" stroke-linejoin="round" stroke-linecap="round"><path d="M9.5 4.5 L13.85 7.0 V12.0 L9.5 14.5 L5.15 12.0 V7.0 Z M5.15 7.0 L9.5 9.5 L13.85 7.0 M9.5 9.5 V14.5" fill="#fff" stroke="#9a9a9a" stroke-width=".85"/><path d="M14.5 9 L18.85 11.5 V16.5 L14.5 19 L10.15 16.5 V11.5 Z M10.15 11.5 L14.5 14 L18.85 11.5 M14.5 14 V19" fill="#fff" stroke="#f08088" stroke-width=".85"/></g>
<g transform="translate(406.00 2701.25) scale(2.8125)" fill="none" stroke="#1a1a1a" stroke-width="1.15" stroke-linejoin="round" stroke-linecap="round"><path d="M5 18.5 Q14 13 18.5 4.5 M7 4.5 Q10 13 19 18.5" stroke="#8a8a8a" stroke-width="1"/></g>
<g transform="translate(489.50 2701.25) scale(2.8125)" fill="none" stroke="#1a1a1a" stroke-width="1.15" stroke-linejoin="round" stroke-linecap="round"><rect x="4.5" y="4.5" width="7" height="7" fill="#c6c6c6" stroke="#9a9a9a" stroke-width=".8"/><rect x="13" y="13" width="7" height="7" fill="#c6c6c6" stroke="#9a9a9a" stroke-width=".8"/><rect x="8.5" y="8.5" width="7.5" height="7.5" fill="#fbfbd4" stroke="#aab090" stroke-width=".8"/></g>
<g transform="translate(557.00 2701.25) scale(2.8125)" fill="none" stroke="#1a1a1a" stroke-width="1.15" stroke-linejoin="round" stroke-linecap="round"><rect x="8.5" y="8.5" width="7.5" height="7.5" fill="#fbfbd4" stroke="#aab090" stroke-width=".8"/><rect x="4.5" y="4.5" width="7" height="7" fill="#c6c6c6" stroke="#9a9a9a" stroke-width=".8"/><rect x="13" y="13" width="7" height="7" fill="#c6c6c6" stroke="#9a9a9a" stroke-width=".8"/></g>
<g transform="translate(639.50 2701.25) scale(2.8125)" fill="none" stroke="#1a1a1a" stroke-width="1.15" stroke-linejoin="round" stroke-linecap="round"><path d="M3.5 20 V11 H9.5 Q9 5.5 14 5 Q19.5 5 19.5 10.5 Q19.5 14 16.5 15.5 V20 Z" fill="#a2a2a2" stroke="#111" stroke-width="1.3"/></g>
<g transform="translate(707.00 2701.25) scale(2.8125)" fill="none" stroke="#1a1a1a" stroke-width="1.15" stroke-linejoin="round" stroke-linecap="round"><ellipse cx="12" cy="12" rx="7.6" ry="8.6" fill="#fff" stroke="#111" stroke-width="1"/><ellipse cx="12" cy="12" rx="5.2" ry="6.2" fill="#fff" stroke="#f01828" stroke-width="2"/><ellipse cx="12" cy="12" rx="2.1" ry="3.1" fill="#fff" stroke="#111" stroke-width="1.1"/></g></svg>
</body></html>
